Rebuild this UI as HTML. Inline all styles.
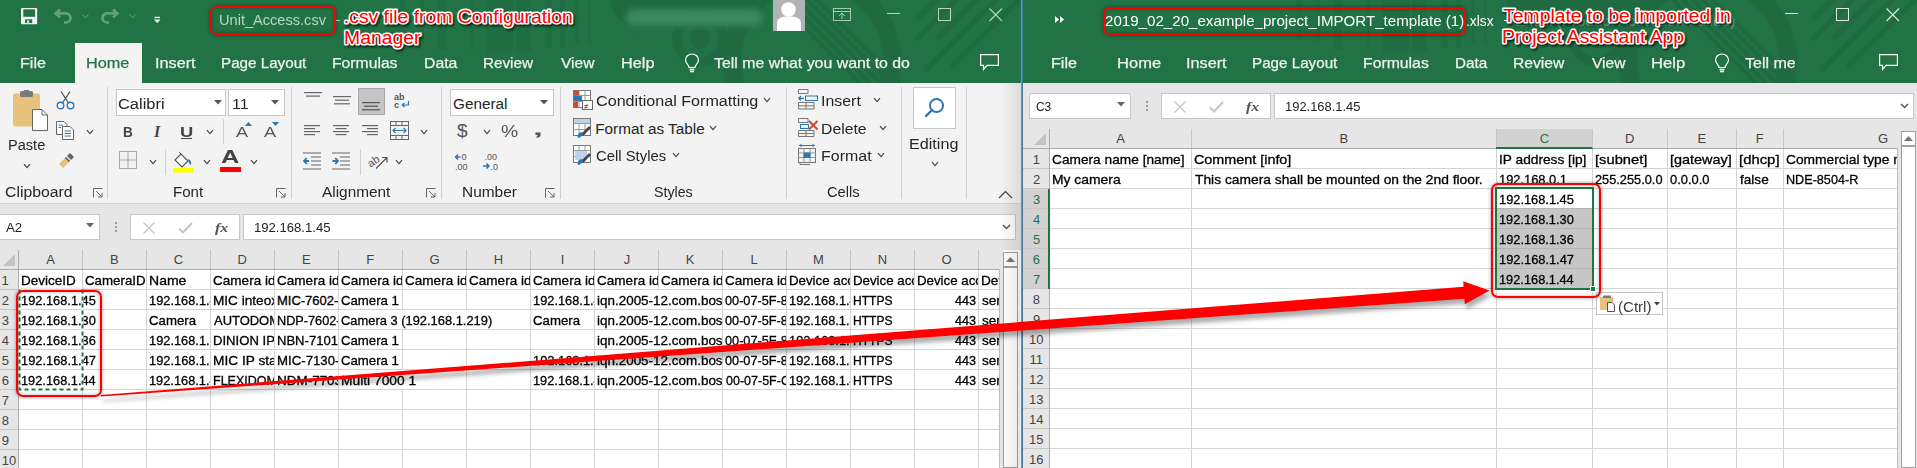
<!DOCTYPE html><html><head><meta charset="utf-8"><style>html,body{margin:0;padding:0;}body{width:1917px;height:468px;overflow:hidden;position:relative;background:#fff;font-family:"Liberation Sans",sans-serif;}svg{overflow:visible}</style></head><body>
<div style="position:absolute;left:0px;top:0px;width:1022px;height:83px;background:#217346;"></div>
<svg style="position:absolute;left:0px;top:0px;" width="1021" height="83" viewBox="0 0 1021 83"><rect x="400" y="0" width="5" height="40" fill="#1f6a41" opacity="0.65"/><rect x="420" y="0" width="4" height="42" fill="#1f6a41" opacity="0.65"/><rect x="437" y="0" width="9" height="50" fill="#1f6a41" opacity="0.65"/><rect x="471" y="0" width="3" height="50" fill="#1f6a41" opacity="0.65"/><rect x="486" y="0" width="27" height="53" fill="#1f6a41" opacity="0.65"/><rect x="516" y="0" width="15" height="53" fill="#1f6a41" opacity="0.65"/><rect x="545" y="0" width="7" height="48" fill="#1f6a41" opacity="0.65"/><rect x="560" y="0" width="5" height="48" fill="#1f6a41" opacity="0.65"/><rect x="575" y="0" width="4" height="45" fill="#1f6a41" opacity="0.65"/><rect x="588" y="0" width="3" height="45" fill="#1f6a41" opacity="0.65"/><rect x="611" y="-30" width="150" height="58" rx="28" fill="#1f6a41"/><circle cx="700" cy="38.5" r="10.1" fill="#1f6a41"/><circle cx="700" cy="38.5" r="23.2" fill="none" stroke="#1f6a41" stroke-width="9"/><circle cx="812" cy="60" r="80" fill="none" stroke="#1f6a41" stroke-width="18"/><path d="M772 -5 L867 90" stroke="#1f6a41" stroke-width="4"/><path d="M782 -5 L877 90" stroke="#1f6a41" stroke-width="4"/><path d="M792 -5 L887 90" stroke="#1f6a41" stroke-width="4"/><path d="M802 -5 L897 90" stroke="#1f6a41" stroke-width="4"/><path d="M812 -5 L907 90" stroke="#1f6a41" stroke-width="4"/><path d="M918.6 17.7 L959 -22" stroke="#1f6a41" stroke-width="5.5" stroke-linecap="round"/><path d="M918 38 L998 -42" stroke="#1f6a41" stroke-width="5.5" stroke-linecap="round"/><path d="M938 38 L1030 -54" stroke="#1f6a41" stroke-width="5.5" stroke-linecap="round"/><path d="M926.5 69 L1030 -34" stroke="#1f6a41" stroke-width="5.5" stroke-linecap="round"/><path d="M953 65.6 L1030 -11" stroke="#1f6a41" stroke-width="5.5" stroke-linecap="round"/></svg>
<div style="position:absolute;left:626px;top:9px;width:136px;height:17px;border-radius:8px;background:#3b8860;filter:blur(3px)"></div>
<svg style="position:absolute;left:21px;top:8px;" width="17" height="17" viewBox="0 0 17 17"><rect x="0" y="0" width="16.2" height="16.3" rx="1.2" fill="#f2f2f2"/><rect x="2.3" y="1.3" width="11.8" height="7.5" fill="#217346"/><rect x="4.1" y="11.3" width="7.1" height="3.8" fill="#217346"/><rect x="6.2" y="12.3" width="1.7" height="2.8" fill="#f2f2f2"/></svg>
<svg style="position:absolute;left:54px;top:9px;" width="19" height="16" viewBox="0 0 19 16"><path d="M2 4.4 H12 A4.55 4.55 0 0 1 12 13.5 H10" fill="none" stroke="#62a07f" stroke-width="2.6"/><path d="M6 0.6 L1.6 4.4 L6 8.2" fill="none" stroke="#62a07f" stroke-width="2.6"/></svg>
<svg style="position:absolute;left:82px;top:14px;" width="8" height="5" viewBox="0 0 8 5"><path d="M0.5 0.5 L3.5 3.8 L6.5 0.5" fill="none" stroke="#62a07f" stroke-width="1"/></svg>
<svg style="position:absolute;left:101px;top:9px;" width="19" height="16" viewBox="0 0 19 16"><path d="M16 4.4 H6 A4.55 4.55 0 0 0 6 13.5 H8" fill="none" stroke="#62a07f" stroke-width="2.6"/><path d="M12 0.6 L16.4 4.4 L12 8.2" fill="none" stroke="#62a07f" stroke-width="2.6"/></svg>
<svg style="position:absolute;left:129px;top:14px;" width="8" height="5" viewBox="0 0 8 5"><path d="M0.5 0.5 L3.5 3.8 L6.5 0.5" fill="none" stroke="#62a07f" stroke-width="1"/></svg>
<svg style="position:absolute;left:154px;top:16px;" width="7" height="8" viewBox="0 0 7 8"><rect x="0.5" y="0.8" width="5.5" height="1.3" fill="#fff"/><polygon points="0,3.6 6.5,3.6 3.25,7" fill="#fff"/></svg>
<div style="position:absolute;left:218.61px;top:12.08px;font-size:15.5px;line-height:15.5px;color:#b9d5c4;white-space:pre;transform-origin:0 0;transform:scaleX(0.9408);">Unit_Access.csv</div>
<div style="position:absolute;left:336px;top:20px;width:4px;height:1px;background:#b9d5c4;"></div>
<svg style="position:absolute;left:773px;top:0px;" width="32" height="31" viewBox="0 0 32 31"><rect width="32" height="31" fill="#b3b3b3"/><circle cx="15.5" cy="9.5" r="7.3" fill="#fff"/><path d="M4 31 V23 C4 18 8 16.5 15.5 16.5 C23 16.5 28 18 28 23 V31 Z" fill="#fff"/></svg>
<svg style="position:absolute;left:833px;top:8px;" width="18" height="14" viewBox="0 0 18 14"><rect x="0.5" y="0.5" width="17" height="12" fill="none" stroke="#d2e6da" stroke-width="1" opacity="0.75"/><line x1="0.5" y1="3.5" x2="17.5" y2="3.5" stroke="#d2e6da" opacity="0.75"/><path d="M9 11 V5.5 M6 8 L9 5 L12 8" fill="none" stroke="#d2e6da" opacity="0.75"/></svg>
<div style="position:absolute;left:887px;top:13px;width:13px;height:1px;background:#d2e6da;opacity:0.85"></div>
<svg style="position:absolute;left:938px;top:8px;" width="14" height="14" viewBox="0 0 14 14"><rect x="0.5" y="0.5" width="12" height="12" fill="none" stroke="#d2e6da" opacity="0.85"/></svg>
<svg style="position:absolute;left:989px;top:8px;" width="14" height="14" viewBox="0 0 14 14"><path d="M0.5 0.5 L13 13 M13 0.5 L0.5 13" stroke="#d2e6da" stroke-width="1.1" opacity="0.85"/></svg>
<div style="position:absolute;left:75px;top:43px;width:67px;height:40px;background:#f3f3f3;"></div>
<div style="position:absolute;left:19.71px;top:55.10px;font-size:15px;line-height:15px;color:#f1f1f1;white-space:pre;transform-origin:0 0;transform:scaleX(1.0774);-webkit-text-stroke:0.25px #f1f1f1;">File</div>
<div style="position:absolute;left:154.54px;top:55.10px;font-size:15px;line-height:15px;color:#f1f1f1;white-space:pre;transform-origin:0 0;transform:scaleX(1.0811);-webkit-text-stroke:0.25px #f1f1f1;">Insert</div>
<div style="position:absolute;left:220.78px;top:55.10px;font-size:15px;line-height:15px;color:#f1f1f1;white-space:pre;transform-origin:0 0;transform:scaleX(1.0127);-webkit-text-stroke:0.25px #f1f1f1;">Page Layout</div>
<div style="position:absolute;left:332.04px;top:55.10px;font-size:15px;line-height:15px;color:#f1f1f1;white-space:pre;transform-origin:0 0;transform:scaleX(1.0473);-webkit-text-stroke:0.25px #f1f1f1;">Formulas</div>
<div style="position:absolute;left:423.74px;top:55.10px;font-size:15px;line-height:15px;color:#f1f1f1;white-space:pre;transform-origin:0 0;transform:scaleX(1.0509);-webkit-text-stroke:0.25px #f1f1f1;">Data</div>
<div style="position:absolute;left:483.18px;top:55.10px;font-size:15px;line-height:15px;color:#f1f1f1;white-space:pre;transform-origin:0 0;transform:scaleX(1.0167);-webkit-text-stroke:0.25px #f1f1f1;">Review</div>
<div style="position:absolute;left:560.72px;top:55.10px;font-size:15px;line-height:15px;color:#f1f1f1;white-space:pre;transform-origin:0 0;transform:scaleX(1.0381);-webkit-text-stroke:0.25px #f1f1f1;">View</div>
<div style="position:absolute;left:621.20px;top:55.10px;font-size:15px;line-height:15px;color:#f1f1f1;white-space:pre;transform-origin:0 0;transform:scaleX(1.0853);-webkit-text-stroke:0.25px #f1f1f1;">Help</div>
<div style="position:absolute;left:86.20px;top:55.10px;font-size:15px;line-height:15px;color:#217346;white-space:pre;transform-origin:0 0;transform:scaleX(1.0840);-webkit-text-stroke:0.25px #217346;">Home</div>
<svg style="position:absolute;left:684px;top:54px;" width="16" height="19" viewBox="0 0 16 19"><path d="M5 13.5 C5 10.5 1.5 9.5 1.5 6 A6.5 6 0 0 1 14.5 6 C14.5 9.5 11 10.5 11 13.5 Z" fill="none" stroke="#ffffff" stroke-width="1.2"/><path d="M5.5 15.5 H10.5 M6 17.5 H10" stroke="#ffffff" stroke-width="1.3"/></svg>
<div style="position:absolute;left:713.68px;top:55.10px;font-size:15px;line-height:15px;color:#f1f1f1;white-space:pre;transform-origin:0 0;transform:scaleX(1.0586);-webkit-text-stroke:0.25px #f1f1f1;">Tell me what you want to do</div>
<svg style="position:absolute;left:980px;top:54px;" width="19" height="17" viewBox="0 0 19 17"><path d="M0.6 0.6 H18.4 V11.4 H7 L3.5 15.5 V11.4 H0.6 Z" fill="none" stroke="#ffffff" stroke-width="1.2"/></svg>
<div style="position:absolute;left:0px;top:83px;width:1022px;height:120px;background:#f3f3f3;"></div>
<div style="position:absolute;left:0px;top:203px;width:1022px;height:1px;background:#d5d5d5;"></div>
<svg style="position:absolute;left:12px;top:90px;" width="37" height="42" viewBox="0 0 37 42"><rect x="1" y="3.5" width="27" height="33" rx="2" fill="#e8c27c"/><rect x="8" y="1" width="13" height="6" rx="1.5" fill="#7a7a7a"/><rect x="12" y="0" width="5" height="3" fill="#7a7a7a"/><path d="M20.5 19.5 H30 L35.5 25 V40.5 H20.5 Z" fill="#fff" stroke="#666" stroke-width="1"/><path d="M30 19.5 V25 H35.5" fill="none" stroke="#666"/></svg>
<div style="position:absolute;left:8.43px;top:137.05px;font-size:15.3px;line-height:15.3px;color:#262626;white-space:pre;transform-origin:0 0;transform:scaleX(0.9522);">Paste</div>
<svg style="position:absolute;left:23.0px;top:162.5px;" width="8" height="6" viewBox="0 0 8 6"><path d="M1 1.2 L4.0 4.6 L7 1.2" fill="none" stroke="#444" stroke-width="1.2"/></svg>
<svg style="position:absolute;left:56px;top:91px;" width="19" height="19" viewBox="0 0 19 19"><path d="M5 0.5 L12.5 12 M14 0.5 L6.5 12" stroke="#555" stroke-width="1.3" fill="none"/><circle cx="4.5" cy="14.5" r="3.3" fill="none" stroke="#2e75b6" stroke-width="1.4"/><circle cx="14.5" cy="14.5" r="3.3" fill="none" stroke="#2e75b6" stroke-width="1.4"/></svg>
<svg style="position:absolute;left:56px;top:121px;" width="19" height="19" viewBox="0 0 19 19"><path d="M0.5 0.5 H8 L11 3.5 V13.5 H0.5 Z" fill="#fff" stroke="#666"/><path d="M6.5 5.5 H14 L17.5 9 V18.5 H6.5 Z" fill="#fff" stroke="#666"/><path d="M2.5 4 H7 M2.5 6.5 H5 M8.5 10 H15 M8.5 12.5 H15 M8.5 15 H15" stroke="#2e75b6" stroke-width="1"/></svg>
<svg style="position:absolute;left:86.0px;top:129px;" width="8" height="6" viewBox="0 0 8 6"><path d="M1 1.2 L4.0 4.6 L7 1.2" fill="none" stroke="#444" stroke-width="1.2"/></svg>
<svg style="position:absolute;left:58px;top:152px;" width="18" height="17" viewBox="0 0 18 17"><path d="M1 12 L8 5 L12 9 L5 16 Z" fill="#e8c27c"/><path d="M9 4 L12 1 L16 5 L13 8 Z" fill="#666"/><path d="M7.5 5.5 L11.5 9.5" stroke="#555" stroke-width="1.5"/></svg>
<div style="position:absolute;left:5.21px;top:184.45px;font-size:15.3px;line-height:15.3px;color:#262626;white-space:pre;transform-origin:0 0;transform:scaleX(1.0310);">Clipboard</div>
<svg style="position:absolute;left:92.5px;top:187.5px;" width="11" height="10" viewBox="0 0 11 10"><path d="M0.5 9.5 V0.5 H9.5" fill="none" stroke="#666" stroke-width="1"/><path d="M3 3 L9 9 M9 5 V9 H5" fill="none" stroke="#666" stroke-width="1"/></svg>
<div style="position:absolute;left:107px;top:87px;width:1px;height:112px;background:#d1d1d1;"></div>
<div style="position:absolute;left:116px;top:89px;width:110px;height:27px;background:#fff;box-sizing:border-box;border:1px solid #c6c6c6"></div>
<div style="position:absolute;left:118.38px;top:95.65px;font-size:15.3px;line-height:15.3px;color:#262626;white-space:pre;transform-origin:0 0;transform:scaleX(1.0737);">Calibri</div>
<svg style="position:absolute;left:214px;top:99.5px;" width="8" height="5" viewBox="0 0 8 5"><polygon points="0,0 8,0 4,4.5" fill="#555"/></svg>
<div style="position:absolute;left:228px;top:89px;width:57px;height:27px;background:#fff;box-sizing:border-box;border:1px solid #c6c6c6"></div>
<div style="position:absolute;left:231.80px;top:95.65px;font-size:15.3px;line-height:15.3px;color:#262626;white-space:pre;transform-origin:0 0;transform:scaleX(1.0500);">11</div>
<svg style="position:absolute;left:271px;top:99.5px;" width="8" height="5" viewBox="0 0 8 5"><polygon points="0,0 8,0 4,4.5" fill="#555"/></svg>
<div style="position:absolute;left:123.12px;top:124.00px;font-size:15px;line-height:15px;color:#444;font-weight:bold;white-space:pre;transform-origin:0 0;transform:scaleX(0.9071);">B</div>
<div style="position:absolute;left:154px;top:123.5px;font:italic bold 16px/16px 'Liberation Serif',serif;color:#444">I</div>
<div style="position:absolute;left:179.90px;top:124.00px;font-size:15px;line-height:15px;color:#444;font-weight:bold;white-space:pre;transform-origin:0 0;transform:scaleX(1.2222);">U</div>
<div style="position:absolute;left:181px;top:138px;width:11px;height:1.3px;background:#444;"></div>
<svg style="position:absolute;left:206.0px;top:129px;" width="8" height="6" viewBox="0 0 8 6"><path d="M1 1.2 L4.0 4.6 L7 1.2" fill="none" stroke="#444" stroke-width="1.2"/></svg>
<div style="position:absolute;left:223px;top:119px;width:1px;height:25px;background:#d1d1d1;"></div>
<div style="position:absolute;left:236.00px;top:124.30px;font-size:15px;line-height:15px;color:#555;white-space:pre;transform-origin:0 0;transform:scaleX(1.2030);">A</div>
<svg style="position:absolute;left:245px;top:122px;" width="7" height="4" viewBox="0 0 7 4"><polygon points="0,4 3.5,0 7,4" fill="#2e75b6"/></svg>
<div style="position:absolute;left:264.00px;top:125.15px;font-size:14px;line-height:14px;color:#555;white-space:pre;transform-origin:0 0;transform:scaleX(1.2889);">A</div>
<svg style="position:absolute;left:272px;top:122px;" width="7" height="4" viewBox="0 0 7 4"><polygon points="0,0 3.5,4 7,0" fill="#2e75b6"/></svg>
<svg style="position:absolute;left:119px;top:151px;" width="19" height="19" viewBox="0 0 19 19"><rect x="0.5" y="0.5" width="17" height="17" fill="none" stroke="#666" stroke-dasharray="1 1"/><path d="M9 0.5 V17.5 M0.5 9 H17.5" stroke="#666" stroke-dasharray="1 1"/></svg>
<svg style="position:absolute;left:148.5px;top:159px;" width="8" height="6" viewBox="0 0 8 6"><path d="M1 1.2 L4.0 4.6 L7 1.2" fill="none" stroke="#444" stroke-width="1.2"/></svg>
<div style="position:absolute;left:165px;top:149px;width:1px;height:26px;background:#d1d1d1;"></div>
<svg style="position:absolute;left:172px;top:151px;" width="23" height="22" viewBox="0 0 23 22"><path d="M3 9 L9 3 L16 10 L10 16 Z" fill="#fff" stroke="#555" stroke-width="1.2"/><path d="M9 3 L7 0.8" stroke="#555"/><path d="M16 8 C19 9 20 12 18.5 14 C17 12 16 10 16 8 Z" fill="#2e75b6"/><rect x="1" y="17" width="20" height="4.5" fill="#ffff00"/></svg>
<svg style="position:absolute;left:202.5px;top:159px;" width="8" height="6" viewBox="0 0 8 6"><path d="M1 1.2 L4.0 4.6 L7 1.2" fill="none" stroke="#444" stroke-width="1.2"/></svg>
<div style="position:absolute;left:221.37px;top:147.42px;font-size:19px;line-height:19px;color:#444;font-weight:bold;white-space:pre;transform-origin:0 0;transform:scaleX(1.3354);">A</div>
<div style="position:absolute;left:220px;top:167px;width:21px;height:4.5px;background:#ff0000;"></div>
<svg style="position:absolute;left:249.5px;top:159px;" width="8" height="6" viewBox="0 0 8 6"><path d="M1 1.2 L4.0 4.6 L7 1.2" fill="none" stroke="#444" stroke-width="1.2"/></svg>
<div style="position:absolute;left:172.79px;top:183.85px;font-size:15.3px;line-height:15.3px;color:#262626;white-space:pre;transform-origin:0 0;transform:scaleX(0.9864);">Font</div>
<svg style="position:absolute;left:276px;top:187.5px;" width="11" height="10" viewBox="0 0 11 10"><path d="M0.5 9.5 V0.5 H9.5" fill="none" stroke="#666" stroke-width="1"/><path d="M3 3 L9 9 M9 5 V9 H5" fill="none" stroke="#666" stroke-width="1"/></svg>
<div style="position:absolute;left:291px;top:87px;width:1px;height:112px;background:#d1d1d1;"></div>
<svg style="position:absolute;left:304px;top:92px;" width="20" height="9.0" viewBox="0 0 20 9.0"><rect x="0" y="0.0" width="18" height="1.2" fill="#666"/><rect x="2" y="3.5" width="14" height="1.2" fill="#666"/></svg>
<svg style="position:absolute;left:333px;top:96px;" width="20" height="12.8" viewBox="0 0 20 12.8"><rect x="0" y="0.0" width="18" height="1.2" fill="#666"/><rect x="2" y="3.6" width="14" height="1.2" fill="#666"/><rect x="1" y="7.2" width="16" height="1.2" fill="#666"/></svg>
<div style="position:absolute;left:358px;top:88px;width:27px;height:27px;background:#c5c5c5;box-sizing:border-box;border:1px solid #a8a8a8"></div>
<svg style="position:absolute;left:362px;top:102px;" width="20" height="12.8" viewBox="0 0 20 12.8"><rect x="0" y="0.0" width="18" height="1.2" fill="#555"/><rect x="2" y="3.6" width="14" height="1.2" fill="#555"/><rect x="0" y="7.2" width="18" height="1.2" fill="#555"/></svg>
<svg style="position:absolute;left:393px;top:92px;" width="18" height="18" viewBox="0 0 18 18"><text x="1" y="7.5" font-family="Liberation Sans" font-size="9" font-weight="bold" fill="#555">ab</text><text x="1" y="16" font-family="Liberation Sans" font-size="9" font-weight="bold" fill="#555">c</text><path d="M15.5 9 V13 H9.5 M11.5 11 L9.2 13 L11.5 15" fill="none" stroke="#2e75b6" stroke-width="1.2"/></svg>
<svg style="position:absolute;left:304px;top:125px;" width="20" height="14" viewBox="0 0 20 14"><rect x="0" y="0" width="16" height="1.2" fill="#666"/><rect x="0" y="3" width="11" height="1.2" fill="#666"/><rect x="0" y="6" width="16" height="1.2" fill="#666"/><rect x="0" y="9" width="11" height="1.2" fill="#666"/></svg>
<svg style="position:absolute;left:333px;top:125px;" width="20" height="14" viewBox="0 0 20 14"><rect x="0" y="0" width="16" height="1.2" fill="#666"/><rect x="2.5" y="3" width="11" height="1.2" fill="#666"/><rect x="0" y="6" width="16" height="1.2" fill="#666"/><rect x="2.5" y="9" width="11" height="1.2" fill="#666"/></svg>
<svg style="position:absolute;left:362px;top:125px;" width="20" height="14" viewBox="0 0 20 14"><rect x="0" y="0" width="16" height="1.2" fill="#666"/><rect x="5" y="3" width="11" height="1.2" fill="#666"/><rect x="0" y="6" width="16" height="1.2" fill="#666"/><rect x="5" y="9" width="11" height="1.2" fill="#666"/></svg>
<svg style="position:absolute;left:390px;top:121px;" width="21" height="20" viewBox="0 0 21 20"><rect x="0.5" y="0.5" width="18" height="18" fill="none" stroke="#666"/><path d="M0.5 4.5 H18.5 M0.5 14.5 H18.5 M6 0.5 V4.5 M12 0.5 V4.5 M6 14.5 V18.5 M12 14.5 V18.5" stroke="#666"/><path d="M3 9.5 H16 M5.5 7 L3 9.5 L5.5 12 M13.5 7 L16 9.5 L13.5 12" fill="none" stroke="#2e75b6" stroke-width="1.2"/></svg>
<svg style="position:absolute;left:420.0px;top:129px;" width="8" height="6" viewBox="0 0 8 6"><path d="M1 1.2 L4.0 4.6 L7 1.2" fill="none" stroke="#444" stroke-width="1.2"/></svg>
<svg style="position:absolute;left:303px;top:152px;" width="20" height="18" viewBox="0 0 20 18"><path d="M0 1 H18 M8 5 H18 M8 9 H18 M8 13 H18 M0 17 H18" stroke="#666" stroke-width="1.1"/><path d="M6 9 H1 M3.8 6 L1 9 L3.8 12" fill="none" stroke="#2e75b6" stroke-width="1.8"/></svg>
<svg style="position:absolute;left:332px;top:152px;" width="20" height="18" viewBox="0 0 20 18"><path d="M0 1 H18 M8 5 H18 M8 9 H18 M8 13 H18 M0 17 H18" stroke="#666" stroke-width="1.1"/><path d="M0.5 9 H6 M3.2 6 L6 9 L3.2 12" fill="none" stroke="#2e75b6" stroke-width="1.8"/></svg>
<div style="position:absolute;left:360px;top:149px;width:1px;height:26px;background:#d1d1d1;"></div>
<svg style="position:absolute;left:367px;top:151px;" width="22" height="19" viewBox="0 0 22 19"><text x="0" y="14" font-family="Liberation Sans" font-size="11" fill="#555" transform="rotate(-35 6 10)">ab</text><path d="M9 17.5 L20 6.5 M15 6.5 H20 V11.5" fill="none" stroke="#555" stroke-width="1.2"/></svg>
<svg style="position:absolute;left:394.5px;top:159px;" width="8" height="6" viewBox="0 0 8 6"><path d="M1 1.2 L4.0 4.6 L7 1.2" fill="none" stroke="#444" stroke-width="1.2"/></svg>
<div style="position:absolute;left:321.50px;top:184.45px;font-size:15.3px;line-height:15.3px;color:#262626;white-space:pre;transform-origin:0 0;transform:scaleX(1.0054);">Alignment</div>
<svg style="position:absolute;left:426px;top:187.5px;" width="11" height="10" viewBox="0 0 11 10"><path d="M0.5 9.5 V0.5 H9.5" fill="none" stroke="#666" stroke-width="1"/><path d="M3 3 L9 9 M9 5 V9 H5" fill="none" stroke="#666" stroke-width="1"/></svg>
<div style="position:absolute;left:441px;top:87px;width:1px;height:112px;background:#d1d1d1;"></div>
<div style="position:absolute;left:450px;top:89px;width:104px;height:27px;background:#fff;box-sizing:border-box;border:1px solid #c6c6c6"></div>
<div style="position:absolute;left:453.03px;top:95.65px;font-size:15.3px;line-height:15.3px;color:#262626;white-space:pre;transform-origin:0 0;">General</div>
<svg style="position:absolute;left:540px;top:99.5px;" width="8" height="5" viewBox="0 0 8 5"><polygon points="0,0 8,0 4,4.5" fill="#555"/></svg>
<div style="position:absolute;left:457.11px;top:121.42px;font-size:19px;line-height:19px;color:#555;white-space:pre;transform-origin:0 0;">$</div>
<svg style="position:absolute;left:482.6px;top:129px;" width="8" height="6" viewBox="0 0 8 6"><path d="M1 1.2 L4.0 4.6 L7 1.2" fill="none" stroke="#444" stroke-width="1.2"/></svg>
<div style="position:absolute;left:500.92px;top:123.11px;font-size:17px;line-height:17px;color:#555;white-space:pre;transform-origin:0 0;transform:scaleX(1.1406);">%</div>
<div style="position:absolute;left:533.00px;top:120.61px;font-size:17px;line-height:17px;color:#555;font-weight:bold;white-space:pre;transform-origin:0 0;transform:scaleX(2.1008);">,</div>
<svg style="position:absolute;left:454px;top:151px;" width="18" height="20" viewBox="0 0 18 20"><path d="M6.5 6 H1.5 M4 3.5 L1.5 6 L4 8.5" fill="none" stroke="#2e75b6" stroke-width="1.5"/><text x="7.5" y="9" font-family="Liberation Sans" font-size="9" fill="#555">0</text><text x="1" y="18.5" font-family="Liberation Sans" font-size="9" fill="#555">.00</text></svg>
<svg style="position:absolute;left:482px;top:151px;" width="20" height="20" viewBox="0 0 20 20"><text x="2.5" y="9" font-family="Liberation Sans" font-size="9" fill="#555">.00</text><path d="M1 15 H7 M4.5 12.5 L7 15 L4.5 17.5" fill="none" stroke="#2e75b6" stroke-width="1.5"/><text x="8.5" y="18.5" font-family="Liberation Sans" font-size="9" fill="#555">.0</text></svg>
<div style="position:absolute;left:462.07px;top:183.85px;font-size:15.3px;line-height:15.3px;color:#262626;white-space:pre;transform-origin:0 0;transform:scaleX(1.0087);">Number</div>
<svg style="position:absolute;left:545px;top:187.5px;" width="11" height="10" viewBox="0 0 11 10"><path d="M0.5 9.5 V0.5 H9.5" fill="none" stroke="#666" stroke-width="1"/><path d="M3 3 L9 9 M9 5 V9 H5" fill="none" stroke="#666" stroke-width="1"/></svg>
<div style="position:absolute;left:560px;top:87px;width:1px;height:112px;background:#d1d1d1;"></div>
<svg style="position:absolute;left:573px;top:90px;" width="21" height="21" viewBox="0 0 21 21"><rect x="0.5" y="0.5" width="17" height="17" fill="#fff" stroke="#777"/><path d="M0.5 5.5 H17.5 M0.5 11.5 H17.5 M6 0.5 V17.5 M12 0.5 V17.5" stroke="#999"/><rect x="1" y="1" width="5" height="4.5" fill="#d24726"/><rect x="1" y="6" width="8" height="5" fill="#2e75b6"/><rect x="1" y="12" width="4" height="5" fill="#d24726"/><rect x="9.5" y="10.5" width="10" height="9" fill="#fff" stroke="#666"/><text x="11" y="18.5" font-family="Liberation Sans" font-size="8" fill="#444">≠</text></svg>
<div style="position:absolute;left:595.69px;top:93.05px;font-size:15.3px;line-height:15.3px;color:#262626;white-space:pre;transform-origin:0 0;transform:scaleX(1.0548);">Conditional Formatting</div>
<svg style="position:absolute;left:762.5px;top:96.5px;" width="8" height="6" viewBox="0 0 8 6"><path d="M1 1.2 L4.0 4.6 L7 1.2" fill="none" stroke="#444" stroke-width="1.2"/></svg>
<svg style="position:absolute;left:573px;top:118px;" width="21" height="21" viewBox="0 0 21 21"><rect x="0.5" y="0.5" width="17" height="17" fill="#fff" stroke="#777"/><path d="M0.5 5.5 H17.5 M0.5 11.5 H17.5 M6 0.5 V17.5 M12 0.5 V17.5" stroke="#999"/><rect x="1" y="1" width="16" height="4" fill="#bcd3ee"/><path d="M9 17 L17 9" stroke="#444" stroke-width="2.6"/><path d="M5 20 C4 17 6 14 9 14 L10 16 C9 18 7 20 5 20 Z" fill="#2e75b6"/></svg>
<div style="position:absolute;left:595.28px;top:121.05px;font-size:15.3px;line-height:15.3px;color:#262626;white-space:pre;transform-origin:0 0;">Format as Table</div>
<svg style="position:absolute;left:709.0px;top:124.5px;" width="8" height="6" viewBox="0 0 8 6"><path d="M1 1.2 L4.0 4.6 L7 1.2" fill="none" stroke="#444" stroke-width="1.2"/></svg>
<svg style="position:absolute;left:573px;top:145px;" width="21" height="21" viewBox="0 0 21 21"><rect x="0.5" y="0.5" width="17" height="17" fill="#fff" stroke="#777"/><path d="M0.5 5.5 H17.5 M0.5 11.5 H17.5 M6 0.5 V17.5 M12 0.5 V17.5" stroke="#999"/><rect x="2" y="6" width="12" height="9" fill="#bcd3ee"/><path d="M9 17 L17 9" stroke="#444" stroke-width="2.6"/><path d="M5 20 C4 17 6 14 9 14 L10 16 C9 18 7 20 5 20 Z" fill="#2e75b6"/></svg>
<div style="position:absolute;left:595.76px;top:148.35px;font-size:15.3px;line-height:15.3px;color:#262626;white-space:pre;transform-origin:0 0;transform:scaleX(0.9705);">Cell Styles</div>
<svg style="position:absolute;left:671.5px;top:152px;" width="8" height="6" viewBox="0 0 8 6"><path d="M1 1.2 L4.0 4.6 L7 1.2" fill="none" stroke="#444" stroke-width="1.2"/></svg>
<div style="position:absolute;left:653.76px;top:184.45px;font-size:15.3px;line-height:15.3px;color:#262626;white-space:pre;transform-origin:0 0;transform:scaleX(0.9291);">Styles</div>
<div style="position:absolute;left:786px;top:87px;width:1px;height:112px;background:#d1d1d1;"></div>
<svg style="position:absolute;left:798px;top:89px;" width="20" height="21" viewBox="0 0 20 21"><path d="M0.5 0.5 H10 V4.5 H0.5 Z M0.5 13.5 H16 V20 H0.5 Z M8 13.5 V20 M0.5 16.8 H16" fill="none" stroke="#777"/><rect x="7.5" y="7" width="12" height="4.5" fill="none" stroke="#2e75b6"/><path d="M6 9.3 H1 M3 7 L0.8 9.3 L3 11.6" fill="none" stroke="#2e75b6" stroke-width="1.3"/></svg>
<div style="position:absolute;left:820.97px;top:93.05px;font-size:15.3px;line-height:15.3px;color:#262626;white-space:pre;transform-origin:0 0;transform:scaleX(1.0409);">Insert</div>
<svg style="position:absolute;left:873.0px;top:96.5px;" width="8" height="6" viewBox="0 0 8 6"><path d="M1 1.2 L4.0 4.6 L7 1.2" fill="none" stroke="#444" stroke-width="1.2"/></svg>
<svg style="position:absolute;left:798px;top:118px;" width="21" height="19" viewBox="0 0 21 19"><path d="M0.5 0.5 H10 V4.5 H0.5 Z M0.5 12.5 H16 V18.5 H0.5 Z M8 12.5 V18.5 M0.5 15.5 H16" fill="none" stroke="#777"/><rect x="2.5" y="6.5" width="8" height="4" fill="none" stroke="#2e75b6"/><path d="M11 3 L19.5 11.5 M19.5 3 L11 11.5" stroke="#d24726" stroke-width="2"/></svg>
<div style="position:absolute;left:821.14px;top:121.05px;font-size:15.3px;line-height:15.3px;color:#262626;white-space:pre;transform-origin:0 0;transform:scaleX(1.0306);">Delete</div>
<svg style="position:absolute;left:878.5px;top:124.5px;" width="8" height="6" viewBox="0 0 8 6"><path d="M1 1.2 L4.0 4.6 L7 1.2" fill="none" stroke="#444" stroke-width="1.2"/></svg>
<svg style="position:absolute;left:798px;top:144px;" width="21" height="21" viewBox="0 0 21 21"><path d="M1 1.5 H17 M3 0 V3 M15 0 V3" stroke="#2e75b6" stroke-width="1"/><rect x="0.5" y="4.5" width="17" height="14" fill="none" stroke="#777"/><path d="M0.5 9 H17.5 M0.5 13.5 H17.5 M6 4.5 V18.5 M12 4.5 V18.5" stroke="#999"/><rect x="5.5" y="8.5" width="7" height="5.5" fill="#2e75b6"/><path d="M2 18.5 V20.5 H12" stroke="#777" fill="none"/></svg>
<div style="position:absolute;left:821.12px;top:148.35px;font-size:15.3px;line-height:15.3px;color:#262626;white-space:pre;transform-origin:0 0;transform:scaleX(1.0441);">Format</div>
<svg style="position:absolute;left:877.0px;top:152px;" width="8" height="6" viewBox="0 0 8 6"><path d="M1 1.2 L4.0 4.6 L7 1.2" fill="none" stroke="#444" stroke-width="1.2"/></svg>
<div style="position:absolute;left:827.17px;top:184.45px;font-size:15.3px;line-height:15.3px;color:#262626;white-space:pre;transform-origin:0 0;transform:scaleX(0.9590);">Cells</div>
<div style="position:absolute;left:901px;top:87px;width:1px;height:112px;background:#d1d1d1;"></div>
<div style="position:absolute;left:913px;top:87px;width:43px;height:42px;background:#ffffff;box-sizing:border-box;border:1px solid #c6c6c6"></div>
<svg style="position:absolute;left:924px;top:97px;" width="22" height="22" viewBox="0 0 22 22"><circle cx="12.5" cy="8.5" r="6.5" fill="none" stroke="#2e75b6" stroke-width="2"/><path d="M8 13 L2 19" stroke="#2e75b6" stroke-width="2.4" stroke-linecap="round"/></svg>
<div style="position:absolute;left:909.41px;top:136.05px;font-size:15.3px;line-height:15.3px;color:#262626;white-space:pre;transform-origin:0 0;transform:scaleX(1.0556);">Editing</div>
<svg style="position:absolute;left:930.5px;top:161px;" width="8" height="6" viewBox="0 0 8 6"><path d="M1 1.2 L4.0 4.6 L7 1.2" fill="none" stroke="#444" stroke-width="1.2"/></svg>
<div style="position:absolute;left:966px;top:87px;width:1px;height:112px;background:#d1d1d1;"></div>
<svg style="position:absolute;left:998px;top:190px;" width="15" height="9" viewBox="0 0 15 9"><path d="M1 8 L7.5 1.5 L14 8" fill="none" stroke="#444" stroke-width="1.2"/></svg>
<div style="position:absolute;left:0px;top:204px;width:1022px;height:46px;background:#e6e6e6;"></div>
<div style="position:absolute;left:-1px;top:214px;width:101px;height:26px;background:#ffffff;box-sizing:border-box;border:1px solid #c6c6c6"></div>
<div style="position:absolute;left:5.50px;top:220.70px;font-size:13px;line-height:13px;color:#222;white-space:pre;transform-origin:0 0;transform:scaleX(1.0191);">A2</div>
<svg style="position:absolute;left:86px;top:223.3px;" width="8" height="5" viewBox="0 0 8 5"><polygon points="0,0 8,0 4,4.5" fill="#666"/></svg>
<div style="position:absolute;left:115px;top:222px;width:2px;height:2px;background:#9a9a9a;"></div>
<div style="position:absolute;left:115px;top:226px;width:2px;height:2px;background:#9a9a9a;"></div>
<div style="position:absolute;left:115px;top:230px;width:2px;height:2px;background:#9a9a9a;"></div>
<div style="position:absolute;left:130px;top:214px;width:110px;height:26px;background:#ffffff;box-sizing:border-box;border:1px solid #c6c6c6"></div>
<svg style="position:absolute;left:143px;top:222px;" width="12" height="12" viewBox="0 0 12 12"><path d="M0.5 0.5 L11.5 11.5 M11.5 0.5 L0.5 11.5" stroke="#c4c4c4" stroke-width="1.3"/></svg>
<svg style="position:absolute;left:178px;top:222px;" width="15" height="12" viewBox="0 0 15 12"><path d="M1 6.5 L5 10.5 L14 1" fill="none" stroke="#c4c4c4" stroke-width="2"/></svg>
<div style="position:absolute;left:215.26px;top:221.00px;font-size:13px;line-height:13px;color:#555;white-space:pre;transform-origin:0 0;transform:scaleX(1.2226);font-family:'Liberation Serif',serif;font-style:italic;font-weight:bold;">fx</div>
<div style="position:absolute;left:243px;top:214px;width:773px;height:26px;background:#ffffff;box-sizing:border-box;border:1px solid #c6c6c6"></div>
<div style="position:absolute;left:254.02px;top:220.70px;font-size:13px;line-height:13px;color:#222;white-space:pre;transform-origin:0 0;transform:scaleX(1.0077);">192.168.1.45</div>
<svg style="position:absolute;left:1002px;top:224px;" width="9" height="6" viewBox="0 0 9 6"><path d="M1 1 L4.5 4.5 L8 1" fill="none" stroke="#555" stroke-width="1.5"/></svg>
<div style="position:absolute;left:0px;top:250px;width:1000px;height:19px;background:#e6e6e6;"></div>
<div style="position:absolute;left:0px;top:270px;width:18px;height:198px;background:#e6e6e6;"></div>
<div style="position:absolute;left:19px;top:270px;width:981px;height:198px;background:#ffffff;"></div>
<div style="position:absolute;left:0px;top:269px;width:999px;height:1px;background:#ababab;"></div>
<div style="position:absolute;left:18px;top:250px;width:1px;height:218px;background:#ababab;"></div>
<svg style="position:absolute;left:0;top:250px" width="18" height="19"><polygon points="15,4 15,16 3,16" fill="#c4c4c4"/></svg>
<div style="position:absolute;left:82px;top:250px;width:1px;height:19px;background:#c6c6c6;"></div>
<div style="position:absolute;left:18px;top:250px;width:64px;height:19px;overflow:hidden"><div style="position:absolute;left:28.18px;top:3.20px;font-size:13px;line-height:13px;color:#444444;white-space:pre;transform-origin:0 0;">A</div></div>
<div style="position:absolute;left:146px;top:250px;width:1px;height:19px;background:#c6c6c6;"></div>
<div style="position:absolute;left:82px;top:250px;width:64px;height:19px;overflow:hidden"><div style="position:absolute;left:27.98px;top:3.20px;font-size:13px;line-height:13px;color:#444444;white-space:pre;transform-origin:0 0;">B</div></div>
<div style="position:absolute;left:210px;top:250px;width:1px;height:19px;background:#c6c6c6;"></div>
<div style="position:absolute;left:146px;top:250px;width:64px;height:19px;overflow:hidden"><div style="position:absolute;left:27.72px;top:3.20px;font-size:13px;line-height:13px;color:#444444;white-space:pre;transform-origin:0 0;">C</div></div>
<div style="position:absolute;left:274px;top:250px;width:1px;height:19px;background:#c6c6c6;"></div>
<div style="position:absolute;left:210px;top:250px;width:64px;height:19px;overflow:hidden"><div style="position:absolute;left:27.59px;top:3.20px;font-size:13px;line-height:13px;color:#444444;white-space:pre;transform-origin:0 0;">D</div></div>
<div style="position:absolute;left:338px;top:250px;width:1px;height:19px;background:#c6c6c6;"></div>
<div style="position:absolute;left:274px;top:250px;width:64px;height:19px;overflow:hidden"><div style="position:absolute;left:27.92px;top:3.20px;font-size:13px;line-height:13px;color:#444444;white-space:pre;transform-origin:0 0;">E</div></div>
<div style="position:absolute;left:402px;top:250px;width:1px;height:19px;background:#c6c6c6;"></div>
<div style="position:absolute;left:338px;top:250px;width:64px;height:19px;overflow:hidden"><div style="position:absolute;left:28.27px;top:3.20px;font-size:13px;line-height:13px;color:#444444;white-space:pre;transform-origin:0 0;">F</div></div>
<div style="position:absolute;left:466px;top:250px;width:1px;height:19px;background:#c6c6c6;"></div>
<div style="position:absolute;left:402px;top:250px;width:64px;height:19px;overflow:hidden"><div style="position:absolute;left:27.59px;top:3.20px;font-size:13px;line-height:13px;color:#444444;white-space:pre;transform-origin:0 0;">G</div></div>
<div style="position:absolute;left:530px;top:250px;width:1px;height:19px;background:#c6c6c6;"></div>
<div style="position:absolute;left:466px;top:250px;width:64px;height:19px;overflow:hidden"><div style="position:absolute;left:27.82px;top:3.20px;font-size:13px;line-height:13px;color:#444444;white-space:pre;transform-origin:0 0;">H</div></div>
<div style="position:absolute;left:594px;top:250px;width:1px;height:19px;background:#c6c6c6;"></div>
<div style="position:absolute;left:530px;top:250px;width:64px;height:19px;overflow:hidden"><div style="position:absolute;left:30.71px;top:3.20px;font-size:13px;line-height:13px;color:#444444;white-space:pre;transform-origin:0 0;">I</div></div>
<div style="position:absolute;left:658px;top:250px;width:1px;height:19px;background:#c6c6c6;"></div>
<div style="position:absolute;left:594px;top:250px;width:64px;height:19px;overflow:hidden"><div style="position:absolute;left:29.64px;top:3.20px;font-size:13px;line-height:13px;color:#444444;white-space:pre;transform-origin:0 0;">J</div></div>
<div style="position:absolute;left:722px;top:250px;width:1px;height:19px;background:#c6c6c6;"></div>
<div style="position:absolute;left:658px;top:250px;width:64px;height:19px;overflow:hidden"><div style="position:absolute;left:27.72px;top:3.20px;font-size:13px;line-height:13px;color:#444444;white-space:pre;transform-origin:0 0;">K</div></div>
<div style="position:absolute;left:786px;top:250px;width:1px;height:19px;background:#c6c6c6;"></div>
<div style="position:absolute;left:722px;top:250px;width:64px;height:19px;overflow:hidden"><div style="position:absolute;left:28.57px;top:3.20px;font-size:13px;line-height:13px;color:#444444;white-space:pre;transform-origin:0 0;">L</div></div>
<div style="position:absolute;left:850px;top:250px;width:1px;height:19px;background:#c6c6c6;"></div>
<div style="position:absolute;left:786px;top:250px;width:64px;height:19px;overflow:hidden"><div style="position:absolute;left:27.10px;top:3.20px;font-size:13px;line-height:13px;color:#444444;white-space:pre;transform-origin:0 0;">M</div></div>
<div style="position:absolute;left:914px;top:250px;width:1px;height:19px;background:#c6c6c6;"></div>
<div style="position:absolute;left:850px;top:250px;width:64px;height:19px;overflow:hidden"><div style="position:absolute;left:27.82px;top:3.20px;font-size:13px;line-height:13px;color:#444444;white-space:pre;transform-origin:0 0;">N</div></div>
<div style="position:absolute;left:978px;top:250px;width:1px;height:19px;background:#c6c6c6;"></div>
<div style="position:absolute;left:914px;top:250px;width:64px;height:19px;overflow:hidden"><div style="position:absolute;left:27.46px;top:3.20px;font-size:13px;line-height:13px;color:#444444;white-space:pre;transform-origin:0 0;">O</div></div>
<div style="position:absolute;left:0px;top:289px;width:18px;height:1px;background:#c6c6c6;"></div>
<div style="position:absolute;left:19px;top:289px;width:980px;height:1px;background:#d4d4d4;"></div>
<div style="position:absolute;left:1.50px;top:273.70px;font-size:13px;line-height:13px;color:#444444;white-space:pre;transform-origin:0 0;">1</div>
<div style="position:absolute;left:0px;top:309px;width:18px;height:1px;background:#c6c6c6;"></div>
<div style="position:absolute;left:19px;top:309px;width:980px;height:1px;background:#d4d4d4;"></div>
<div style="position:absolute;left:1.69px;top:293.70px;font-size:13px;line-height:13px;color:#444444;white-space:pre;transform-origin:0 0;">2</div>
<div style="position:absolute;left:0px;top:329px;width:18px;height:1px;background:#c6c6c6;"></div>
<div style="position:absolute;left:19px;top:329px;width:980px;height:1px;background:#d4d4d4;"></div>
<div style="position:absolute;left:1.69px;top:313.70px;font-size:13px;line-height:13px;color:#444444;white-space:pre;transform-origin:0 0;">3</div>
<div style="position:absolute;left:0px;top:349px;width:18px;height:1px;background:#c6c6c6;"></div>
<div style="position:absolute;left:19px;top:349px;width:980px;height:1px;background:#d4d4d4;"></div>
<div style="position:absolute;left:1.76px;top:333.70px;font-size:13px;line-height:13px;color:#444444;white-space:pre;transform-origin:0 0;">4</div>
<div style="position:absolute;left:0px;top:369px;width:18px;height:1px;background:#c6c6c6;"></div>
<div style="position:absolute;left:19px;top:369px;width:980px;height:1px;background:#d4d4d4;"></div>
<div style="position:absolute;left:1.69px;top:353.70px;font-size:13px;line-height:13px;color:#444444;white-space:pre;transform-origin:0 0;">5</div>
<div style="position:absolute;left:0px;top:389px;width:18px;height:1px;background:#c6c6c6;"></div>
<div style="position:absolute;left:19px;top:389px;width:980px;height:1px;background:#d4d4d4;"></div>
<div style="position:absolute;left:1.63px;top:373.70px;font-size:13px;line-height:13px;color:#444444;white-space:pre;transform-origin:0 0;">6</div>
<div style="position:absolute;left:0px;top:409px;width:18px;height:1px;background:#c6c6c6;"></div>
<div style="position:absolute;left:19px;top:409px;width:980px;height:1px;background:#d4d4d4;"></div>
<div style="position:absolute;left:1.69px;top:393.70px;font-size:13px;line-height:13px;color:#444444;white-space:pre;transform-origin:0 0;">7</div>
<div style="position:absolute;left:0px;top:429px;width:18px;height:1px;background:#c6c6c6;"></div>
<div style="position:absolute;left:19px;top:429px;width:980px;height:1px;background:#d4d4d4;"></div>
<div style="position:absolute;left:1.66px;top:413.70px;font-size:13px;line-height:13px;color:#444444;white-space:pre;transform-origin:0 0;">8</div>
<div style="position:absolute;left:0px;top:449px;width:18px;height:1px;background:#c6c6c6;"></div>
<div style="position:absolute;left:19px;top:449px;width:980px;height:1px;background:#d4d4d4;"></div>
<div style="position:absolute;left:1.69px;top:433.70px;font-size:13px;line-height:13px;color:#444444;white-space:pre;transform-origin:0 0;">9</div>
<div style="position:absolute;left:0px;top:469px;width:18px;height:1px;background:#c6c6c6;"></div>
<div style="position:absolute;left:19px;top:469px;width:980px;height:1px;background:#d4d4d4;"></div>
<div style="position:absolute;left:1.72px;top:453.70px;font-size:13px;line-height:13px;color:#444444;white-space:pre;transform-origin:0 0;">10</div>
<div style="position:absolute;left:82px;top:270px;width:1px;height:19px;background:#d4d4d4;"></div>
<div style="position:absolute;left:82px;top:390px;width:1px;height:19px;background:#d4d4d4;"></div>
<div style="position:absolute;left:82px;top:410px;width:1px;height:19px;background:#d4d4d4;"></div>
<div style="position:absolute;left:82px;top:430px;width:1px;height:19px;background:#d4d4d4;"></div>
<div style="position:absolute;left:82px;top:450px;width:1px;height:19px;background:#d4d4d4;"></div>
<div style="position:absolute;left:146px;top:270px;width:1px;height:19px;background:#d4d4d4;"></div>
<div style="position:absolute;left:146px;top:290px;width:1px;height:19px;background:#d4d4d4;"></div>
<div style="position:absolute;left:146px;top:310px;width:1px;height:19px;background:#d4d4d4;"></div>
<div style="position:absolute;left:146px;top:330px;width:1px;height:19px;background:#d4d4d4;"></div>
<div style="position:absolute;left:146px;top:350px;width:1px;height:19px;background:#d4d4d4;"></div>
<div style="position:absolute;left:146px;top:370px;width:1px;height:19px;background:#d4d4d4;"></div>
<div style="position:absolute;left:146px;top:390px;width:1px;height:19px;background:#d4d4d4;"></div>
<div style="position:absolute;left:146px;top:410px;width:1px;height:19px;background:#d4d4d4;"></div>
<div style="position:absolute;left:146px;top:430px;width:1px;height:19px;background:#d4d4d4;"></div>
<div style="position:absolute;left:146px;top:450px;width:1px;height:19px;background:#d4d4d4;"></div>
<div style="position:absolute;left:210px;top:270px;width:1px;height:19px;background:#d4d4d4;"></div>
<div style="position:absolute;left:210px;top:290px;width:1px;height:19px;background:#d4d4d4;"></div>
<div style="position:absolute;left:210px;top:310px;width:1px;height:19px;background:#d4d4d4;"></div>
<div style="position:absolute;left:210px;top:330px;width:1px;height:19px;background:#d4d4d4;"></div>
<div style="position:absolute;left:210px;top:350px;width:1px;height:19px;background:#d4d4d4;"></div>
<div style="position:absolute;left:210px;top:370px;width:1px;height:19px;background:#d4d4d4;"></div>
<div style="position:absolute;left:210px;top:390px;width:1px;height:19px;background:#d4d4d4;"></div>
<div style="position:absolute;left:210px;top:410px;width:1px;height:19px;background:#d4d4d4;"></div>
<div style="position:absolute;left:210px;top:430px;width:1px;height:19px;background:#d4d4d4;"></div>
<div style="position:absolute;left:210px;top:450px;width:1px;height:19px;background:#d4d4d4;"></div>
<div style="position:absolute;left:274px;top:270px;width:1px;height:19px;background:#d4d4d4;"></div>
<div style="position:absolute;left:274px;top:290px;width:1px;height:19px;background:#d4d4d4;"></div>
<div style="position:absolute;left:274px;top:310px;width:1px;height:19px;background:#d4d4d4;"></div>
<div style="position:absolute;left:274px;top:330px;width:1px;height:19px;background:#d4d4d4;"></div>
<div style="position:absolute;left:274px;top:350px;width:1px;height:19px;background:#d4d4d4;"></div>
<div style="position:absolute;left:274px;top:370px;width:1px;height:19px;background:#d4d4d4;"></div>
<div style="position:absolute;left:274px;top:390px;width:1px;height:19px;background:#d4d4d4;"></div>
<div style="position:absolute;left:274px;top:410px;width:1px;height:19px;background:#d4d4d4;"></div>
<div style="position:absolute;left:274px;top:430px;width:1px;height:19px;background:#d4d4d4;"></div>
<div style="position:absolute;left:274px;top:450px;width:1px;height:19px;background:#d4d4d4;"></div>
<div style="position:absolute;left:338px;top:270px;width:1px;height:19px;background:#d4d4d4;"></div>
<div style="position:absolute;left:338px;top:290px;width:1px;height:19px;background:#d4d4d4;"></div>
<div style="position:absolute;left:338px;top:310px;width:1px;height:19px;background:#d4d4d4;"></div>
<div style="position:absolute;left:338px;top:330px;width:1px;height:19px;background:#d4d4d4;"></div>
<div style="position:absolute;left:338px;top:350px;width:1px;height:19px;background:#d4d4d4;"></div>
<div style="position:absolute;left:338px;top:370px;width:1px;height:19px;background:#d4d4d4;"></div>
<div style="position:absolute;left:338px;top:390px;width:1px;height:19px;background:#d4d4d4;"></div>
<div style="position:absolute;left:338px;top:410px;width:1px;height:19px;background:#d4d4d4;"></div>
<div style="position:absolute;left:338px;top:430px;width:1px;height:19px;background:#d4d4d4;"></div>
<div style="position:absolute;left:338px;top:450px;width:1px;height:19px;background:#d4d4d4;"></div>
<div style="position:absolute;left:402px;top:270px;width:1px;height:19px;background:#d4d4d4;"></div>
<div style="position:absolute;left:402px;top:290px;width:1px;height:19px;background:#d4d4d4;"></div>
<div style="position:absolute;left:402px;top:330px;width:1px;height:19px;background:#d4d4d4;"></div>
<div style="position:absolute;left:402px;top:350px;width:1px;height:19px;background:#d4d4d4;"></div>
<div style="position:absolute;left:402px;top:390px;width:1px;height:19px;background:#d4d4d4;"></div>
<div style="position:absolute;left:402px;top:410px;width:1px;height:19px;background:#d4d4d4;"></div>
<div style="position:absolute;left:402px;top:430px;width:1px;height:19px;background:#d4d4d4;"></div>
<div style="position:absolute;left:402px;top:450px;width:1px;height:19px;background:#d4d4d4;"></div>
<div style="position:absolute;left:466px;top:270px;width:1px;height:19px;background:#d4d4d4;"></div>
<div style="position:absolute;left:466px;top:290px;width:1px;height:19px;background:#d4d4d4;"></div>
<div style="position:absolute;left:466px;top:330px;width:1px;height:19px;background:#d4d4d4;"></div>
<div style="position:absolute;left:466px;top:350px;width:1px;height:19px;background:#d4d4d4;"></div>
<div style="position:absolute;left:466px;top:370px;width:1px;height:19px;background:#d4d4d4;"></div>
<div style="position:absolute;left:466px;top:390px;width:1px;height:19px;background:#d4d4d4;"></div>
<div style="position:absolute;left:466px;top:410px;width:1px;height:19px;background:#d4d4d4;"></div>
<div style="position:absolute;left:466px;top:430px;width:1px;height:19px;background:#d4d4d4;"></div>
<div style="position:absolute;left:466px;top:450px;width:1px;height:19px;background:#d4d4d4;"></div>
<div style="position:absolute;left:530px;top:270px;width:1px;height:19px;background:#d4d4d4;"></div>
<div style="position:absolute;left:530px;top:290px;width:1px;height:19px;background:#d4d4d4;"></div>
<div style="position:absolute;left:530px;top:310px;width:1px;height:19px;background:#d4d4d4;"></div>
<div style="position:absolute;left:530px;top:330px;width:1px;height:19px;background:#d4d4d4;"></div>
<div style="position:absolute;left:530px;top:350px;width:1px;height:19px;background:#d4d4d4;"></div>
<div style="position:absolute;left:530px;top:370px;width:1px;height:19px;background:#d4d4d4;"></div>
<div style="position:absolute;left:530px;top:390px;width:1px;height:19px;background:#d4d4d4;"></div>
<div style="position:absolute;left:530px;top:410px;width:1px;height:19px;background:#d4d4d4;"></div>
<div style="position:absolute;left:530px;top:430px;width:1px;height:19px;background:#d4d4d4;"></div>
<div style="position:absolute;left:530px;top:450px;width:1px;height:19px;background:#d4d4d4;"></div>
<div style="position:absolute;left:594px;top:270px;width:1px;height:19px;background:#d4d4d4;"></div>
<div style="position:absolute;left:594px;top:290px;width:1px;height:19px;background:#d4d4d4;"></div>
<div style="position:absolute;left:594px;top:310px;width:1px;height:19px;background:#d4d4d4;"></div>
<div style="position:absolute;left:594px;top:330px;width:1px;height:19px;background:#d4d4d4;"></div>
<div style="position:absolute;left:594px;top:350px;width:1px;height:19px;background:#d4d4d4;"></div>
<div style="position:absolute;left:594px;top:370px;width:1px;height:19px;background:#d4d4d4;"></div>
<div style="position:absolute;left:594px;top:390px;width:1px;height:19px;background:#d4d4d4;"></div>
<div style="position:absolute;left:594px;top:410px;width:1px;height:19px;background:#d4d4d4;"></div>
<div style="position:absolute;left:594px;top:430px;width:1px;height:19px;background:#d4d4d4;"></div>
<div style="position:absolute;left:594px;top:450px;width:1px;height:19px;background:#d4d4d4;"></div>
<div style="position:absolute;left:658px;top:270px;width:1px;height:19px;background:#d4d4d4;"></div>
<div style="position:absolute;left:658px;top:390px;width:1px;height:19px;background:#d4d4d4;"></div>
<div style="position:absolute;left:658px;top:410px;width:1px;height:19px;background:#d4d4d4;"></div>
<div style="position:absolute;left:658px;top:430px;width:1px;height:19px;background:#d4d4d4;"></div>
<div style="position:absolute;left:658px;top:450px;width:1px;height:19px;background:#d4d4d4;"></div>
<div style="position:absolute;left:722px;top:270px;width:1px;height:19px;background:#d4d4d4;"></div>
<div style="position:absolute;left:722px;top:290px;width:1px;height:19px;background:#d4d4d4;"></div>
<div style="position:absolute;left:722px;top:310px;width:1px;height:19px;background:#d4d4d4;"></div>
<div style="position:absolute;left:722px;top:330px;width:1px;height:19px;background:#d4d4d4;"></div>
<div style="position:absolute;left:722px;top:350px;width:1px;height:19px;background:#d4d4d4;"></div>
<div style="position:absolute;left:722px;top:370px;width:1px;height:19px;background:#d4d4d4;"></div>
<div style="position:absolute;left:722px;top:390px;width:1px;height:19px;background:#d4d4d4;"></div>
<div style="position:absolute;left:722px;top:410px;width:1px;height:19px;background:#d4d4d4;"></div>
<div style="position:absolute;left:722px;top:430px;width:1px;height:19px;background:#d4d4d4;"></div>
<div style="position:absolute;left:722px;top:450px;width:1px;height:19px;background:#d4d4d4;"></div>
<div style="position:absolute;left:786px;top:270px;width:1px;height:19px;background:#d4d4d4;"></div>
<div style="position:absolute;left:786px;top:290px;width:1px;height:19px;background:#d4d4d4;"></div>
<div style="position:absolute;left:786px;top:310px;width:1px;height:19px;background:#d4d4d4;"></div>
<div style="position:absolute;left:786px;top:330px;width:1px;height:19px;background:#d4d4d4;"></div>
<div style="position:absolute;left:786px;top:350px;width:1px;height:19px;background:#d4d4d4;"></div>
<div style="position:absolute;left:786px;top:370px;width:1px;height:19px;background:#d4d4d4;"></div>
<div style="position:absolute;left:786px;top:390px;width:1px;height:19px;background:#d4d4d4;"></div>
<div style="position:absolute;left:786px;top:410px;width:1px;height:19px;background:#d4d4d4;"></div>
<div style="position:absolute;left:786px;top:430px;width:1px;height:19px;background:#d4d4d4;"></div>
<div style="position:absolute;left:786px;top:450px;width:1px;height:19px;background:#d4d4d4;"></div>
<div style="position:absolute;left:850px;top:270px;width:1px;height:19px;background:#d4d4d4;"></div>
<div style="position:absolute;left:850px;top:290px;width:1px;height:19px;background:#d4d4d4;"></div>
<div style="position:absolute;left:850px;top:310px;width:1px;height:19px;background:#d4d4d4;"></div>
<div style="position:absolute;left:850px;top:330px;width:1px;height:19px;background:#d4d4d4;"></div>
<div style="position:absolute;left:850px;top:350px;width:1px;height:19px;background:#d4d4d4;"></div>
<div style="position:absolute;left:850px;top:370px;width:1px;height:19px;background:#d4d4d4;"></div>
<div style="position:absolute;left:850px;top:390px;width:1px;height:19px;background:#d4d4d4;"></div>
<div style="position:absolute;left:850px;top:410px;width:1px;height:19px;background:#d4d4d4;"></div>
<div style="position:absolute;left:850px;top:430px;width:1px;height:19px;background:#d4d4d4;"></div>
<div style="position:absolute;left:850px;top:450px;width:1px;height:19px;background:#d4d4d4;"></div>
<div style="position:absolute;left:914px;top:270px;width:1px;height:19px;background:#d4d4d4;"></div>
<div style="position:absolute;left:914px;top:290px;width:1px;height:19px;background:#d4d4d4;"></div>
<div style="position:absolute;left:914px;top:310px;width:1px;height:19px;background:#d4d4d4;"></div>
<div style="position:absolute;left:914px;top:330px;width:1px;height:19px;background:#d4d4d4;"></div>
<div style="position:absolute;left:914px;top:350px;width:1px;height:19px;background:#d4d4d4;"></div>
<div style="position:absolute;left:914px;top:370px;width:1px;height:19px;background:#d4d4d4;"></div>
<div style="position:absolute;left:914px;top:390px;width:1px;height:19px;background:#d4d4d4;"></div>
<div style="position:absolute;left:914px;top:410px;width:1px;height:19px;background:#d4d4d4;"></div>
<div style="position:absolute;left:914px;top:430px;width:1px;height:19px;background:#d4d4d4;"></div>
<div style="position:absolute;left:914px;top:450px;width:1px;height:19px;background:#d4d4d4;"></div>
<div style="position:absolute;left:978px;top:270px;width:1px;height:19px;background:#d4d4d4;"></div>
<div style="position:absolute;left:978px;top:290px;width:1px;height:19px;background:#d4d4d4;"></div>
<div style="position:absolute;left:978px;top:310px;width:1px;height:19px;background:#d4d4d4;"></div>
<div style="position:absolute;left:978px;top:330px;width:1px;height:19px;background:#d4d4d4;"></div>
<div style="position:absolute;left:978px;top:350px;width:1px;height:19px;background:#d4d4d4;"></div>
<div style="position:absolute;left:978px;top:370px;width:1px;height:19px;background:#d4d4d4;"></div>
<div style="position:absolute;left:978px;top:390px;width:1px;height:19px;background:#d4d4d4;"></div>
<div style="position:absolute;left:978px;top:410px;width:1px;height:19px;background:#d4d4d4;"></div>
<div style="position:absolute;left:978px;top:430px;width:1px;height:19px;background:#d4d4d4;"></div>
<div style="position:absolute;left:978px;top:450px;width:1px;height:19px;background:#d4d4d4;"></div>
<div style="position:absolute;left:19px;top:270px;width:63px;height:20px;overflow:hidden"><div style="position:absolute;left:1.92px;top:3.90px;font-size:13px;line-height:13px;color:#000000;white-space:pre;transform-origin:0 0;transform:scaleX(1.0372);-webkit-text-stroke:0.3px #000000;">DeviceID</div></div>
<div style="position:absolute;left:83px;top:270px;width:63px;height:20px;overflow:hidden"><div style="position:absolute;left:2.34px;top:3.90px;font-size:13px;line-height:13px;color:#000000;white-space:pre;transform-origin:0 0;transform:scaleX(1.0228);-webkit-text-stroke:0.3px #000000;">CameraID</div></div>
<div style="position:absolute;left:147px;top:270px;width:63px;height:20px;overflow:hidden"><div style="position:absolute;left:1.88px;top:3.90px;font-size:13px;line-height:13px;color:#000000;white-space:pre;transform-origin:0 0;transform:scaleX(1.0789);-webkit-text-stroke:0.3px #000000;">Name</div></div>
<div style="position:absolute;left:211px;top:270px;width:63px;height:20px;overflow:hidden"><div style="position:absolute;left:2.32px;top:3.90px;font-size:13px;line-height:13px;color:#000000;white-space:pre;transform-origin:0 0;transform:scaleX(1.0429);-webkit-text-stroke:0.3px #000000;">Camera id</div></div>
<div style="position:absolute;left:275px;top:270px;width:63px;height:20px;overflow:hidden"><div style="position:absolute;left:2.32px;top:3.90px;font-size:13px;line-height:13px;color:#000000;white-space:pre;transform-origin:0 0;transform:scaleX(1.0429);-webkit-text-stroke:0.3px #000000;">Camera id</div></div>
<div style="position:absolute;left:339px;top:270px;width:63px;height:20px;overflow:hidden"><div style="position:absolute;left:2.32px;top:3.90px;font-size:13px;line-height:13px;color:#000000;white-space:pre;transform-origin:0 0;transform:scaleX(1.0429);-webkit-text-stroke:0.3px #000000;">Camera id</div></div>
<div style="position:absolute;left:403px;top:270px;width:63px;height:20px;overflow:hidden"><div style="position:absolute;left:2.32px;top:3.90px;font-size:13px;line-height:13px;color:#000000;white-space:pre;transform-origin:0 0;transform:scaleX(1.0429);-webkit-text-stroke:0.3px #000000;">Camera id</div></div>
<div style="position:absolute;left:467px;top:270px;width:63px;height:20px;overflow:hidden"><div style="position:absolute;left:2.32px;top:3.90px;font-size:13px;line-height:13px;color:#000000;white-space:pre;transform-origin:0 0;transform:scaleX(1.0429);-webkit-text-stroke:0.3px #000000;">Camera id</div></div>
<div style="position:absolute;left:531px;top:270px;width:63px;height:20px;overflow:hidden"><div style="position:absolute;left:2.32px;top:3.90px;font-size:13px;line-height:13px;color:#000000;white-space:pre;transform-origin:0 0;transform:scaleX(1.0429);-webkit-text-stroke:0.3px #000000;">Camera id</div></div>
<div style="position:absolute;left:595px;top:270px;width:63px;height:20px;overflow:hidden"><div style="position:absolute;left:2.32px;top:3.90px;font-size:13px;line-height:13px;color:#000000;white-space:pre;transform-origin:0 0;transform:scaleX(1.0429);-webkit-text-stroke:0.3px #000000;">Camera id</div></div>
<div style="position:absolute;left:659px;top:270px;width:63px;height:20px;overflow:hidden"><div style="position:absolute;left:2.32px;top:3.90px;font-size:13px;line-height:13px;color:#000000;white-space:pre;transform-origin:0 0;transform:scaleX(1.0429);-webkit-text-stroke:0.3px #000000;">Camera id</div></div>
<div style="position:absolute;left:723px;top:270px;width:63px;height:20px;overflow:hidden"><div style="position:absolute;left:2.32px;top:3.90px;font-size:13px;line-height:13px;color:#000000;white-space:pre;transform-origin:0 0;transform:scaleX(1.0429);-webkit-text-stroke:0.3px #000000;">Camera id</div></div>
<div style="position:absolute;left:787px;top:270px;width:63px;height:20px;overflow:hidden"><div style="position:absolute;left:1.94px;top:3.90px;font-size:13px;line-height:13px;color:#000000;white-space:pre;transform-origin:0 0;transform:scaleX(1.0208);-webkit-text-stroke:0.3px #000000;">Device acce</div></div>
<div style="position:absolute;left:851px;top:270px;width:63px;height:20px;overflow:hidden"><div style="position:absolute;left:1.94px;top:3.90px;font-size:13px;line-height:13px;color:#000000;white-space:pre;transform-origin:0 0;transform:scaleX(1.0208);-webkit-text-stroke:0.3px #000000;">Device acce</div></div>
<div style="position:absolute;left:915px;top:270px;width:63px;height:20px;overflow:hidden"><div style="position:absolute;left:1.94px;top:3.90px;font-size:13px;line-height:13px;color:#000000;white-space:pre;transform-origin:0 0;transform:scaleX(1.0208);-webkit-text-stroke:0.3px #000000;">Device acce</div></div>
<div style="position:absolute;left:979px;top:270px;width:20px;height:20px;overflow:hidden"><div style="position:absolute;left:1.91px;top:3.90px;font-size:13px;line-height:13px;color:#000000;white-space:pre;transform-origin:0 0;transform:scaleX(1.0506);-webkit-text-stroke:0.3px #000000;">Device</div></div>
<div style="position:absolute;left:19px;top:290px;width:127px;height:20px;overflow:hidden"><div style="position:absolute;left:2.04px;top:3.90px;font-size:13px;line-height:13px;color:#000000;white-space:pre;transform-origin:0 0;transform:scaleX(0.9858);-webkit-text-stroke:0.3px #000000;">192.168.1.45</div></div>
<div style="position:absolute;left:147px;top:290px;width:63px;height:20px;overflow:hidden"><div style="position:absolute;left:2.04px;top:3.90px;font-size:13px;line-height:13px;color:#000000;white-space:pre;transform-origin:0 0;transform:scaleX(0.9858);-webkit-text-stroke:0.3px #000000;">192.168.1.45</div></div>
<div style="position:absolute;left:211px;top:290px;width:63px;height:20px;overflow:hidden"><div style="position:absolute;left:1.91px;top:3.90px;font-size:13px;line-height:13px;color:#000000;white-space:pre;transform-origin:0 0;transform:scaleX(1.0466);-webkit-text-stroke:0.3px #000000;">MIC inteox 7100i</div></div>
<div style="position:absolute;left:275px;top:290px;width:63px;height:20px;overflow:hidden"><div style="position:absolute;left:1.96px;top:3.90px;font-size:13px;line-height:13px;color:#000000;white-space:pre;transform-origin:0 0;-webkit-text-stroke:0.3px #000000;">MIC-7602-Z0</div></div>
<div style="position:absolute;left:339px;top:290px;width:191px;height:20px;overflow:hidden"><div style="position:absolute;left:2.34px;top:3.90px;font-size:13px;line-height:13px;color:#000000;white-space:pre;transform-origin:0 0;transform:scaleX(1.0142);-webkit-text-stroke:0.3px #000000;">Camera 1</div></div>
<div style="position:absolute;left:531px;top:290px;width:63px;height:20px;overflow:hidden"><div style="position:absolute;left:2.04px;top:3.90px;font-size:13px;line-height:13px;color:#000000;white-space:pre;transform-origin:0 0;transform:scaleX(0.9858);-webkit-text-stroke:0.3px #000000;">192.168.1.45</div></div>
<div style="position:absolute;left:595px;top:290px;width:127px;height:20px;overflow:hidden"><div style="position:absolute;left:2.13px;top:3.90px;font-size:13px;line-height:13px;color:#000000;white-space:pre;transform-origin:0 0;transform:scaleX(1.0343);-webkit-text-stroke:0.3px #000000;">iqn.2005-12.com.bosch</div></div>
<div style="position:absolute;left:723px;top:290px;width:63px;height:20px;overflow:hidden"><div style="position:absolute;left:2.49px;top:3.90px;font-size:13px;line-height:13px;color:#000000;white-space:pre;transform-origin:0 0;transform:scaleX(0.9770);-webkit-text-stroke:0.3px #000000;">00-07-5F-8A-1B</div></div>
<div style="position:absolute;left:787px;top:290px;width:63px;height:20px;overflow:hidden"><div style="position:absolute;left:2.04px;top:3.90px;font-size:13px;line-height:13px;color:#000000;white-space:pre;transform-origin:0 0;transform:scaleX(0.9858);-webkit-text-stroke:0.3px #000000;">192.168.1.45</div></div>
<div style="position:absolute;left:851px;top:290px;width:63px;height:20px;overflow:hidden"><div style="position:absolute;left:2.04px;top:3.90px;font-size:13px;line-height:13px;color:#000000;white-space:pre;transform-origin:0 0;transform:scaleX(0.9258);-webkit-text-stroke:0.3px #000000;">HTTPS</div></div>
<div style="position:absolute;left:915px;top:290px;width:63px;height:20px;overflow:hidden"><div style="position:absolute;left:39.69px;top:3.90px;font-size:13px;line-height:13px;color:#000000;white-space:pre;transform-origin:0 0;transform:scaleX(0.9754);-webkit-text-stroke:0.3px #000000;">443</div></div>
<div style="position:absolute;left:979px;top:290px;width:20px;height:20px;overflow:hidden"><div style="position:absolute;left:2.59px;top:3.90px;font-size:13px;line-height:13px;color:#000000;white-space:pre;transform-origin:0 0;transform:scaleX(1.0425);-webkit-text-stroke:0.3px #000000;">service</div></div>
<div style="position:absolute;left:19px;top:310px;width:127px;height:20px;overflow:hidden"><div style="position:absolute;left:2.04px;top:3.90px;font-size:13px;line-height:13px;color:#000000;white-space:pre;transform-origin:0 0;transform:scaleX(0.9849);-webkit-text-stroke:0.3px #000000;">192.168.1.30</div></div>
<div style="position:absolute;left:147px;top:310px;width:63px;height:20px;overflow:hidden"><div style="position:absolute;left:2.34px;top:3.90px;font-size:13px;line-height:13px;color:#000000;white-space:pre;transform-origin:0 0;transform:scaleX(1.0168);-webkit-text-stroke:0.3px #000000;">Camera</div></div>
<div style="position:absolute;left:211px;top:310px;width:63px;height:20px;overflow:hidden"><div style="position:absolute;left:3.00px;top:3.90px;font-size:13px;line-height:13px;color:#000000;white-space:pre;transform-origin:0 0;transform:scaleX(0.9961);-webkit-text-stroke:0.3px #000000;">AUTODOME</div></div>
<div style="position:absolute;left:275px;top:310px;width:63px;height:20px;overflow:hidden"><div style="position:absolute;left:1.98px;top:3.90px;font-size:13px;line-height:13px;color:#000000;white-space:pre;transform-origin:0 0;transform:scaleX(0.9762);-webkit-text-stroke:0.3px #000000;">NDP-7602-Z30</div></div>
<div style="position:absolute;left:339px;top:310px;width:191px;height:20px;overflow:hidden"><div style="position:absolute;left:2.36px;top:3.90px;font-size:13px;line-height:13px;color:#000000;white-space:pre;transform-origin:0 0;transform:scaleX(0.9920);-webkit-text-stroke:0.3px #000000;">Camera 3 (192.168.1.219)</div></div>
<div style="position:absolute;left:531px;top:310px;width:63px;height:20px;overflow:hidden"><div style="position:absolute;left:2.34px;top:3.90px;font-size:13px;line-height:13px;color:#000000;white-space:pre;transform-origin:0 0;transform:scaleX(1.0168);-webkit-text-stroke:0.3px #000000;">Camera</div></div>
<div style="position:absolute;left:595px;top:310px;width:127px;height:20px;overflow:hidden"><div style="position:absolute;left:2.13px;top:3.90px;font-size:13px;line-height:13px;color:#000000;white-space:pre;transform-origin:0 0;transform:scaleX(1.0343);-webkit-text-stroke:0.3px #000000;">iqn.2005-12.com.bosch</div></div>
<div style="position:absolute;left:723px;top:310px;width:63px;height:20px;overflow:hidden"><div style="position:absolute;left:2.49px;top:3.90px;font-size:13px;line-height:13px;color:#000000;white-space:pre;transform-origin:0 0;transform:scaleX(0.9770);-webkit-text-stroke:0.3px #000000;">00-07-5F-8A-1B</div></div>
<div style="position:absolute;left:787px;top:310px;width:63px;height:20px;overflow:hidden"><div style="position:absolute;left:2.04px;top:3.90px;font-size:13px;line-height:13px;color:#000000;white-space:pre;transform-origin:0 0;transform:scaleX(0.9849);-webkit-text-stroke:0.3px #000000;">192.168.1.30</div></div>
<div style="position:absolute;left:851px;top:310px;width:63px;height:20px;overflow:hidden"><div style="position:absolute;left:2.04px;top:3.90px;font-size:13px;line-height:13px;color:#000000;white-space:pre;transform-origin:0 0;transform:scaleX(0.9258);-webkit-text-stroke:0.3px #000000;">HTTPS</div></div>
<div style="position:absolute;left:915px;top:310px;width:63px;height:20px;overflow:hidden"><div style="position:absolute;left:39.69px;top:3.90px;font-size:13px;line-height:13px;color:#000000;white-space:pre;transform-origin:0 0;transform:scaleX(0.9754);-webkit-text-stroke:0.3px #000000;">443</div></div>
<div style="position:absolute;left:979px;top:310px;width:20px;height:20px;overflow:hidden"><div style="position:absolute;left:2.59px;top:3.90px;font-size:13px;line-height:13px;color:#000000;white-space:pre;transform-origin:0 0;transform:scaleX(1.0425);-webkit-text-stroke:0.3px #000000;">service</div></div>
<div style="position:absolute;left:19px;top:330px;width:127px;height:20px;overflow:hidden"><div style="position:absolute;left:2.04px;top:3.90px;font-size:13px;line-height:13px;color:#000000;white-space:pre;transform-origin:0 0;transform:scaleX(0.9858);-webkit-text-stroke:0.3px #000000;">192.168.1.36</div></div>
<div style="position:absolute;left:147px;top:330px;width:63px;height:20px;overflow:hidden"><div style="position:absolute;left:2.04px;top:3.90px;font-size:13px;line-height:13px;color:#000000;white-space:pre;transform-origin:0 0;transform:scaleX(0.9858);-webkit-text-stroke:0.3px #000000;">192.168.1.36</div></div>
<div style="position:absolute;left:211px;top:330px;width:63px;height:20px;overflow:hidden"><div style="position:absolute;left:1.95px;top:3.90px;font-size:13px;line-height:13px;color:#000000;white-space:pre;transform-origin:0 0;transform:scaleX(1.0087);-webkit-text-stroke:0.3px #000000;">DINION IP</div></div>
<div style="position:absolute;left:275px;top:330px;width:63px;height:20px;overflow:hidden"><div style="position:absolute;left:1.96px;top:3.90px;font-size:13px;line-height:13px;color:#000000;white-space:pre;transform-origin:0 0;transform:scaleX(1.0034);-webkit-text-stroke:0.3px #000000;">NBN-7101</div></div>
<div style="position:absolute;left:339px;top:330px;width:255px;height:20px;overflow:hidden"><div style="position:absolute;left:2.34px;top:3.90px;font-size:13px;line-height:13px;color:#000000;white-space:pre;transform-origin:0 0;transform:scaleX(1.0142);-webkit-text-stroke:0.3px #000000;">Camera 1</div></div>
<div style="position:absolute;left:595px;top:330px;width:127px;height:20px;overflow:hidden"><div style="position:absolute;left:2.13px;top:3.90px;font-size:13px;line-height:13px;color:#000000;white-space:pre;transform-origin:0 0;transform:scaleX(1.0343);-webkit-text-stroke:0.3px #000000;">iqn.2005-12.com.bosch</div></div>
<div style="position:absolute;left:723px;top:330px;width:63px;height:20px;overflow:hidden"><div style="position:absolute;left:2.49px;top:3.90px;font-size:13px;line-height:13px;color:#000000;white-space:pre;transform-origin:0 0;transform:scaleX(0.9770);-webkit-text-stroke:0.3px #000000;">00-07-5F-8A-1B</div></div>
<div style="position:absolute;left:787px;top:330px;width:63px;height:20px;overflow:hidden"><div style="position:absolute;left:2.04px;top:3.90px;font-size:13px;line-height:13px;color:#000000;white-space:pre;transform-origin:0 0;transform:scaleX(0.9858);-webkit-text-stroke:0.3px #000000;">192.168.1.36</div></div>
<div style="position:absolute;left:851px;top:330px;width:63px;height:20px;overflow:hidden"><div style="position:absolute;left:2.04px;top:3.90px;font-size:13px;line-height:13px;color:#000000;white-space:pre;transform-origin:0 0;transform:scaleX(0.9258);-webkit-text-stroke:0.3px #000000;">HTTPS</div></div>
<div style="position:absolute;left:915px;top:330px;width:63px;height:20px;overflow:hidden"><div style="position:absolute;left:39.69px;top:3.90px;font-size:13px;line-height:13px;color:#000000;white-space:pre;transform-origin:0 0;transform:scaleX(0.9754);-webkit-text-stroke:0.3px #000000;">443</div></div>
<div style="position:absolute;left:979px;top:330px;width:20px;height:20px;overflow:hidden"><div style="position:absolute;left:2.59px;top:3.90px;font-size:13px;line-height:13px;color:#000000;white-space:pre;transform-origin:0 0;transform:scaleX(1.0425);-webkit-text-stroke:0.3px #000000;">service</div></div>
<div style="position:absolute;left:19px;top:350px;width:127px;height:20px;overflow:hidden"><div style="position:absolute;left:2.04px;top:3.90px;font-size:13px;line-height:13px;color:#000000;white-space:pre;transform-origin:0 0;transform:scaleX(0.9875);-webkit-text-stroke:0.3px #000000;">192.168.1.47</div></div>
<div style="position:absolute;left:147px;top:350px;width:63px;height:20px;overflow:hidden"><div style="position:absolute;left:2.04px;top:3.90px;font-size:13px;line-height:13px;color:#000000;white-space:pre;transform-origin:0 0;transform:scaleX(0.9875);-webkit-text-stroke:0.3px #000000;">192.168.1.47</div></div>
<div style="position:absolute;left:211px;top:350px;width:63px;height:20px;overflow:hidden"><div style="position:absolute;left:1.91px;top:3.90px;font-size:13px;line-height:13px;color:#000000;white-space:pre;transform-origin:0 0;transform:scaleX(1.0528);-webkit-text-stroke:0.3px #000000;">MIC IP starlight</div></div>
<div style="position:absolute;left:275px;top:350px;width:63px;height:20px;overflow:hidden"><div style="position:absolute;left:1.94px;top:3.90px;font-size:13px;line-height:13px;color:#000000;white-space:pre;transform-origin:0 0;transform:scaleX(1.0177);-webkit-text-stroke:0.3px #000000;">MIC-7130-</div></div>
<div style="position:absolute;left:339px;top:350px;width:191px;height:20px;overflow:hidden"><div style="position:absolute;left:2.34px;top:3.90px;font-size:13px;line-height:13px;color:#000000;white-space:pre;transform-origin:0 0;transform:scaleX(1.0142);-webkit-text-stroke:0.3px #000000;">Camera 1</div></div>
<div style="position:absolute;left:531px;top:350px;width:63px;height:20px;overflow:hidden"><div style="position:absolute;left:2.04px;top:3.90px;font-size:13px;line-height:13px;color:#000000;white-space:pre;transform-origin:0 0;transform:scaleX(0.9875);-webkit-text-stroke:0.3px #000000;">192.168.1.47</div></div>
<div style="position:absolute;left:595px;top:350px;width:127px;height:20px;overflow:hidden"><div style="position:absolute;left:2.13px;top:3.90px;font-size:13px;line-height:13px;color:#000000;white-space:pre;transform-origin:0 0;transform:scaleX(1.0343);-webkit-text-stroke:0.3px #000000;">iqn.2005-12.com.bosch</div></div>
<div style="position:absolute;left:723px;top:350px;width:63px;height:20px;overflow:hidden"><div style="position:absolute;left:2.49px;top:3.90px;font-size:13px;line-height:13px;color:#000000;white-space:pre;transform-origin:0 0;transform:scaleX(0.9770);-webkit-text-stroke:0.3px #000000;">00-07-5F-8A-1B</div></div>
<div style="position:absolute;left:787px;top:350px;width:63px;height:20px;overflow:hidden"><div style="position:absolute;left:2.04px;top:3.90px;font-size:13px;line-height:13px;color:#000000;white-space:pre;transform-origin:0 0;transform:scaleX(0.9875);-webkit-text-stroke:0.3px #000000;">192.168.1.47</div></div>
<div style="position:absolute;left:851px;top:350px;width:63px;height:20px;overflow:hidden"><div style="position:absolute;left:2.04px;top:3.90px;font-size:13px;line-height:13px;color:#000000;white-space:pre;transform-origin:0 0;transform:scaleX(0.9258);-webkit-text-stroke:0.3px #000000;">HTTPS</div></div>
<div style="position:absolute;left:915px;top:350px;width:63px;height:20px;overflow:hidden"><div style="position:absolute;left:39.69px;top:3.90px;font-size:13px;line-height:13px;color:#000000;white-space:pre;transform-origin:0 0;transform:scaleX(0.9754);-webkit-text-stroke:0.3px #000000;">443</div></div>
<div style="position:absolute;left:979px;top:350px;width:20px;height:20px;overflow:hidden"><div style="position:absolute;left:2.59px;top:3.90px;font-size:13px;line-height:13px;color:#000000;white-space:pre;transform-origin:0 0;transform:scaleX(1.0425);-webkit-text-stroke:0.3px #000000;">service</div></div>
<div style="position:absolute;left:19px;top:370px;width:127px;height:20px;overflow:hidden"><div style="position:absolute;left:2.04px;top:3.90px;font-size:13px;line-height:13px;color:#000000;white-space:pre;transform-origin:0 0;transform:scaleX(0.9841);-webkit-text-stroke:0.3px #000000;">192.168.1.44</div></div>
<div style="position:absolute;left:147px;top:370px;width:63px;height:20px;overflow:hidden"><div style="position:absolute;left:2.04px;top:3.90px;font-size:13px;line-height:13px;color:#000000;white-space:pre;transform-origin:0 0;transform:scaleX(0.9841);-webkit-text-stroke:0.3px #000000;">192.168.1.44</div></div>
<div style="position:absolute;left:211px;top:370px;width:63px;height:20px;overflow:hidden"><div style="position:absolute;left:2.00px;top:3.90px;font-size:13px;line-height:13px;color:#000000;white-space:pre;transform-origin:0 0;transform:scaleX(0.9607);-webkit-text-stroke:0.3px #000000;">FLEXIDOME</div></div>
<div style="position:absolute;left:275px;top:370px;width:63px;height:20px;overflow:hidden"><div style="position:absolute;left:1.92px;top:3.90px;font-size:13px;line-height:13px;color:#000000;white-space:pre;transform-origin:0 0;transform:scaleX(1.0357);-webkit-text-stroke:0.3px #000000;">NDM-7703</div></div>
<div style="position:absolute;left:339px;top:370px;width:191px;height:20px;overflow:hidden"><div style="position:absolute;left:1.89px;top:3.90px;font-size:13px;line-height:13px;color:#000000;white-space:pre;transform-origin:0 0;transform:scaleX(1.0626);-webkit-text-stroke:0.3px #000000;">Multi 7000 1</div></div>
<div style="position:absolute;left:531px;top:370px;width:63px;height:20px;overflow:hidden"><div style="position:absolute;left:2.04px;top:3.90px;font-size:13px;line-height:13px;color:#000000;white-space:pre;transform-origin:0 0;transform:scaleX(0.9841);-webkit-text-stroke:0.3px #000000;">192.168.1.44</div></div>
<div style="position:absolute;left:595px;top:370px;width:127px;height:20px;overflow:hidden"><div style="position:absolute;left:2.13px;top:3.90px;font-size:13px;line-height:13px;color:#000000;white-space:pre;transform-origin:0 0;transform:scaleX(1.0343);-webkit-text-stroke:0.3px #000000;">iqn.2005-12.com.bosch</div></div>
<div style="position:absolute;left:723px;top:370px;width:63px;height:20px;overflow:hidden"><div style="position:absolute;left:2.50px;top:3.90px;font-size:13px;line-height:13px;color:#000000;white-space:pre;transform-origin:0 0;transform:scaleX(0.9622);-webkit-text-stroke:0.3px #000000;">00-07-5F-C1-2B</div></div>
<div style="position:absolute;left:787px;top:370px;width:63px;height:20px;overflow:hidden"><div style="position:absolute;left:2.04px;top:3.90px;font-size:13px;line-height:13px;color:#000000;white-space:pre;transform-origin:0 0;transform:scaleX(0.9841);-webkit-text-stroke:0.3px #000000;">192.168.1.44</div></div>
<div style="position:absolute;left:851px;top:370px;width:63px;height:20px;overflow:hidden"><div style="position:absolute;left:2.04px;top:3.90px;font-size:13px;line-height:13px;color:#000000;white-space:pre;transform-origin:0 0;transform:scaleX(0.9258);-webkit-text-stroke:0.3px #000000;">HTTPS</div></div>
<div style="position:absolute;left:915px;top:370px;width:63px;height:20px;overflow:hidden"><div style="position:absolute;left:39.69px;top:3.90px;font-size:13px;line-height:13px;color:#000000;white-space:pre;transform-origin:0 0;transform:scaleX(0.9754);-webkit-text-stroke:0.3px #000000;">443</div></div>
<div style="position:absolute;left:979px;top:370px;width:20px;height:20px;overflow:hidden"><div style="position:absolute;left:2.59px;top:3.90px;font-size:13px;line-height:13px;color:#000000;white-space:pre;transform-origin:0 0;transform:scaleX(1.0425);-webkit-text-stroke:0.3px #000000;">service</div></div>
<div style="position:absolute;left:999px;top:250px;width:4px;height:218px;background:#e6e6e6;"></div>
<div style="position:absolute;left:999px;top:269px;width:1px;height:199px;background:#bdbdbd;"></div>
<div style="position:absolute;left:1003px;top:252px;width:15px;height:15px;background:#ffffff;box-sizing:border-box;border:1px solid #a0a0a0"></div>
<svg style="position:absolute;left:1006px;top:257px;" width="9" height="5" viewBox="0 0 9 5"><polygon points="0,5 4.5,0 9,5" fill="#777"/></svg>
<div style="position:absolute;left:1003px;top:267px;width:15px;height:201px;background:#ffffff;box-sizing:border-box;border:1px solid #a0a0a0;border-left-width:1.5px;border-right-width:1.5px"></div>
<div style="position:absolute;left:1000px;top:83px;width:22px;height:385px;background:linear-gradient(90deg,rgba(0,0,0,0),rgba(0,0,0,0.10))"></div>
<div style="position:absolute;left:1021px;top:0px;width:1px;height:468px;background:#8a8f8c;"></div>
<div style="position:absolute;left:1022px;top:0px;width:1px;height:468px;background:#3f7aa3;"></div>
<div style="position:absolute;left:1023px;top:0px;width:894px;height:83px;background:#217346;"></div>
<div style="position:absolute;left:1023px;top:0;width:894px;height:83px;overflow:hidden"><svg style="position:absolute;left:-127px;top:0px;" width="1030" height="83" viewBox="0 0 1030 83"><rect x="400" y="0" width="5" height="40" fill="#1f6a41" opacity="0.65"/><rect x="420" y="0" width="4" height="42" fill="#1f6a41" opacity="0.65"/><rect x="437" y="0" width="9" height="50" fill="#1f6a41" opacity="0.65"/><rect x="471" y="0" width="3" height="50" fill="#1f6a41" opacity="0.65"/><rect x="486" y="0" width="27" height="53" fill="#1f6a41" opacity="0.65"/><rect x="516" y="0" width="15" height="53" fill="#1f6a41" opacity="0.65"/><rect x="545" y="0" width="7" height="48" fill="#1f6a41" opacity="0.65"/><rect x="560" y="0" width="5" height="48" fill="#1f6a41" opacity="0.65"/><rect x="575" y="0" width="4" height="45" fill="#1f6a41" opacity="0.65"/><rect x="588" y="0" width="3" height="45" fill="#1f6a41" opacity="0.65"/><rect x="611" y="-30" width="150" height="58" rx="28" fill="#1f6a41"/><circle cx="700" cy="38.5" r="10.1" fill="#1f6a41"/><circle cx="700" cy="38.5" r="23.2" fill="none" stroke="#1f6a41" stroke-width="9"/><circle cx="812" cy="60" r="80" fill="none" stroke="#1f6a41" stroke-width="18"/><path d="M772 -5 L867 90" stroke="#1f6a41" stroke-width="4"/><path d="M782 -5 L877 90" stroke="#1f6a41" stroke-width="4"/><path d="M792 -5 L887 90" stroke="#1f6a41" stroke-width="4"/><path d="M802 -5 L897 90" stroke="#1f6a41" stroke-width="4"/><path d="M812 -5 L907 90" stroke="#1f6a41" stroke-width="4"/><path d="M918.6 17.7 L959 -22" stroke="#1f6a41" stroke-width="5.5" stroke-linecap="round"/><path d="M918 38 L998 -42" stroke="#1f6a41" stroke-width="5.5" stroke-linecap="round"/><path d="M938 38 L1030 -54" stroke="#1f6a41" stroke-width="5.5" stroke-linecap="round"/><path d="M926.5 69 L1030 -34" stroke="#1f6a41" stroke-width="5.5" stroke-linecap="round"/><path d="M953 65.6 L1030 -11" stroke="#1f6a41" stroke-width="5.5" stroke-linecap="round"/></svg></div>
<svg style="position:absolute;left:1055px;top:16px;" width="12" height="7" viewBox="0 0 12 7"><polygon points="0,0 4,3.5 0,7" fill="#fff"/><polygon points="5,0 9,3.5 5,7" fill="#fff"/></svg>
<div style="position:absolute;left:1105.24px;top:12.80px;font-size:15px;line-height:15px;color:#ffffff;white-space:pre;transform-origin:0 0;transform:scaleX(1.0073);">2019_02_20_example_project_IMPORT_template (1)</div>
<div style="position:absolute;left:1466.26px;top:12.80px;font-size:15px;line-height:15px;color:#ffffff;white-space:pre;transform-origin:0 0;transform:scaleX(0.9193);">.xlsx</div>
<div style="position:absolute;left:1504px;top:20px;width:4px;height:1px;background:#ffffff;"></div>
<div style="position:absolute;left:1514.78px;top:12.80px;font-size:15px;line-height:15px;color:#cfe3d6;white-space:pre;transform-origin:0 0;transform:scaleX(1.0199);opacity:0.4;">Excel (Product Activation Failed)</div>
<div style="position:absolute;left:1785px;top:13px;width:13px;height:1px;background:#ffffff;opacity:0.85"></div>
<svg style="position:absolute;left:1836px;top:8px;" width="14" height="14" viewBox="0 0 14 14"><rect x="0.5" y="0.5" width="12" height="12" fill="none" stroke="#ffffff" opacity="0.85"/></svg>
<svg style="position:absolute;left:1886px;top:8px;" width="14" height="14" viewBox="0 0 14 14"><path d="M0.5 0.5 L13 13 M13 0.5 L0.5 13" stroke="#ffffff" stroke-width="1.1" opacity="0.85"/></svg>
<div style="position:absolute;left:1050.71px;top:55.10px;font-size:15px;line-height:15px;color:#f1f1f1;white-space:pre;transform-origin:0 0;transform:scaleX(1.0774);-webkit-text-stroke:0.25px #f1f1f1;">File</div>
<div style="position:absolute;left:1116.68px;top:55.10px;font-size:15px;line-height:15px;color:#f1f1f1;white-space:pre;transform-origin:0 0;transform:scaleX(1.1024);-webkit-text-stroke:0.25px #f1f1f1;">Home</div>
<div style="position:absolute;left:1185.54px;top:55.10px;font-size:15px;line-height:15px;color:#f1f1f1;white-space:pre;transform-origin:0 0;transform:scaleX(1.0811);-webkit-text-stroke:0.25px #f1f1f1;">Insert</div>
<div style="position:absolute;left:1251.78px;top:55.10px;font-size:15px;line-height:15px;color:#f1f1f1;white-space:pre;transform-origin:0 0;transform:scaleX(1.0127);-webkit-text-stroke:0.25px #f1f1f1;">Page Layout</div>
<div style="position:absolute;left:1362.74px;top:55.10px;font-size:15px;line-height:15px;color:#f1f1f1;white-space:pre;transform-origin:0 0;transform:scaleX(1.0522);-webkit-text-stroke:0.25px #f1f1f1;">Formulas</div>
<div style="position:absolute;left:1454.78px;top:55.10px;font-size:15px;line-height:15px;color:#f1f1f1;white-space:pre;transform-origin:0 0;transform:scaleX(1.0181);-webkit-text-stroke:0.25px #f1f1f1;">Data</div>
<div style="position:absolute;left:1513.45px;top:55.10px;font-size:15px;line-height:15px;color:#f1f1f1;white-space:pre;transform-origin:0 0;transform:scaleX(1.0417);-webkit-text-stroke:0.25px #f1f1f1;">Review</div>
<div style="position:absolute;left:1591.62px;top:55.10px;font-size:15px;line-height:15px;color:#f1f1f1;white-space:pre;transform-origin:0 0;transform:scaleX(1.0350);-webkit-text-stroke:0.25px #f1f1f1;">View</div>
<div style="position:absolute;left:1651.47px;top:55.10px;font-size:15px;line-height:15px;color:#f1f1f1;white-space:pre;transform-origin:0 0;transform:scaleX(1.1094);-webkit-text-stroke:0.25px #f1f1f1;">Help</div>
<svg style="position:absolute;left:1714px;top:54px;" width="16" height="19" viewBox="0 0 16 19"><path d="M5 13.5 C5 10.5 1.5 9.5 1.5 6 A6.5 6 0 0 1 14.5 6 C14.5 9.5 11 10.5 11 13.5 Z" fill="none" stroke="#ffffff" stroke-width="1.2"/><path d="M5.5 15.5 H10.5 M6 17.5 H10" stroke="#ffffff" stroke-width="1.3"/></svg>
<div style="position:absolute;left:1744.68px;top:55.10px;font-size:15px;line-height:15px;color:#f1f1f1;white-space:pre;transform-origin:0 0;transform:scaleX(1.0688);-webkit-text-stroke:0.25px #f1f1f1;">Tell me</div>
<svg style="position:absolute;left:1879px;top:54px;" width="19" height="17" viewBox="0 0 19 17"><path d="M0.6 0.6 H18.4 V11.4 H7 L3.5 15.5 V11.4 H0.6 Z" fill="none" stroke="#ffffff" stroke-width="1.2"/></svg>
<div style="position:absolute;left:1023px;top:83px;width:894px;height:46px;background:#e6e6e6;"></div>
<div style="position:absolute;left:1029px;top:93px;width:102px;height:26px;background:#ffffff;box-sizing:border-box;border:1px solid #c6c6c6"></div>
<div style="position:absolute;left:1035.81px;top:99.70px;font-size:13px;line-height:13px;color:#222;white-space:pre;transform-origin:0 0;transform:scaleX(0.9153);">C3</div>
<svg style="position:absolute;left:1117px;top:102.3px;" width="8" height="5" viewBox="0 0 8 5"><polygon points="0,0 8,0 4,4.5" fill="#666"/></svg>
<div style="position:absolute;left:1146px;top:101px;width:2px;height:2px;background:#9a9a9a;"></div>
<div style="position:absolute;left:1146px;top:105px;width:2px;height:2px;background:#9a9a9a;"></div>
<div style="position:absolute;left:1146px;top:109px;width:2px;height:2px;background:#9a9a9a;"></div>
<div style="position:absolute;left:1161px;top:93px;width:110px;height:26px;background:#ffffff;box-sizing:border-box;border:1px solid #c6c6c6"></div>
<svg style="position:absolute;left:1174px;top:101px;" width="12" height="12" viewBox="0 0 12 12"><path d="M0.5 0.5 L11.5 11.5 M11.5 0.5 L0.5 11.5" stroke="#c4c4c4" stroke-width="1.3"/></svg>
<svg style="position:absolute;left:1209px;top:101px;" width="15" height="12" viewBox="0 0 15 12"><path d="M1 6.5 L5 10.5 L14 1" fill="none" stroke="#c4c4c4" stroke-width="2"/></svg>
<div style="position:absolute;left:1245.76px;top:100.00px;font-size:13px;line-height:13px;color:#555;white-space:pre;transform-origin:0 0;transform:scaleX(1.2226);font-family:'Liberation Serif',serif;font-style:italic;font-weight:bold;">fx</div>
<div style="position:absolute;left:1274px;top:93px;width:640px;height:26px;background:#ffffff;box-sizing:border-box;border:1px solid #c6c6c6"></div>
<div style="position:absolute;left:1285.03px;top:99.70px;font-size:13px;line-height:13px;color:#222;white-space:pre;transform-origin:0 0;transform:scaleX(0.9943);">192.168.1.45</div>
<svg style="position:absolute;left:1900px;top:103px;" width="9" height="6" viewBox="0 0 9 6"><path d="M1 1 L4.5 4.5 L8 1" fill="none" stroke="#555" stroke-width="1.5"/></svg>
<div style="position:absolute;left:1023px;top:129px;width:875px;height:19px;background:#e6e6e6;"></div>
<div style="position:absolute;left:1023px;top:149px;width:26px;height:319px;background:#e6e6e6;"></div>
<div style="position:absolute;left:1050px;top:149px;width:847px;height:319px;background:#ffffff;"></div>
<div style="position:absolute;left:1023px;top:148px;width:875px;height:1px;background:#ababab;"></div>
<div style="position:absolute;left:1049px;top:129px;width:1px;height:339px;background:#ababab;"></div>
<svg style="position:absolute;left:1023px;top:129px" width="26" height="19"><polygon points="23,4 23,16 11,16" fill="#c4c4c4"/></svg>
<div style="position:absolute;left:1191px;top:129px;width:1px;height:19px;background:#c6c6c6;"></div>
<div style="position:absolute;left:1116.18px;top:132.20px;font-size:13px;line-height:13px;color:#444444;white-space:pre;transform-origin:0 0;">A</div>
<div style="position:absolute;left:1496px;top:129px;width:1px;height:19px;background:#c6c6c6;"></div>
<div style="position:absolute;left:1339.48px;top:132.20px;font-size:13px;line-height:13px;color:#444444;white-space:pre;transform-origin:0 0;">B</div>
<div style="position:absolute;left:1497px;top:129px;width:95px;height:19px;background:#d2d2d2;"></div>
<div style="position:absolute;left:1496px;top:147px;width:97px;height:2px;background:#217346;"></div>
<div style="position:absolute;left:1592px;top:129px;width:1px;height:19px;background:#c6c6c6;"></div>
<div style="position:absolute;left:1539.72px;top:132.20px;font-size:13px;line-height:13px;color:#217346;white-space:pre;transform-origin:0 0;">C</div>
<div style="position:absolute;left:1667px;top:129px;width:1px;height:19px;background:#c6c6c6;"></div>
<div style="position:absolute;left:1625.09px;top:132.20px;font-size:13px;line-height:13px;color:#444444;white-space:pre;transform-origin:0 0;">D</div>
<div style="position:absolute;left:1736px;top:129px;width:1px;height:19px;background:#c6c6c6;"></div>
<div style="position:absolute;left:1697.42px;top:132.20px;font-size:13px;line-height:13px;color:#444444;white-space:pre;transform-origin:0 0;">E</div>
<div style="position:absolute;left:1783px;top:129px;width:1px;height:19px;background:#c6c6c6;"></div>
<div style="position:absolute;left:1755.78px;top:132.20px;font-size:13px;line-height:13px;color:#444444;white-space:pre;transform-origin:0 0;">F</div>
<div style="position:absolute;left:1878.09px;top:132.20px;font-size:13px;line-height:13px;color:#444444;white-space:pre;transform-origin:0 0;">G</div>
<div style="position:absolute;left:1023px;top:168px;width:26px;height:1px;background:#c6c6c6;"></div>
<div style="position:absolute;left:1050px;top:168px;width:847px;height:1px;background:#d4d4d4;"></div>
<div style="position:absolute;left:1032.70px;top:152.70px;font-size:13px;line-height:13px;color:#444444;white-space:pre;transform-origin:0 0;">1</div>
<div style="position:absolute;left:1023px;top:188px;width:26px;height:1px;background:#c6c6c6;"></div>
<div style="position:absolute;left:1050px;top:188px;width:847px;height:1px;background:#d4d4d4;"></div>
<div style="position:absolute;left:1032.89px;top:172.70px;font-size:13px;line-height:13px;color:#444444;white-space:pre;transform-origin:0 0;">2</div>
<div style="position:absolute;left:1023px;top:189px;width:26px;height:19px;background:#d2d2d2;"></div>
<div style="position:absolute;left:1023px;top:208px;width:26px;height:1px;background:#c6c6c6;"></div>
<div style="position:absolute;left:1050px;top:208px;width:847px;height:1px;background:#d4d4d4;"></div>
<div style="position:absolute;left:1032.89px;top:192.70px;font-size:13px;line-height:13px;color:#217346;white-space:pre;transform-origin:0 0;">3</div>
<div style="position:absolute;left:1023px;top:209px;width:26px;height:19px;background:#d2d2d2;"></div>
<div style="position:absolute;left:1023px;top:228px;width:26px;height:1px;background:#c6c6c6;"></div>
<div style="position:absolute;left:1050px;top:228px;width:847px;height:1px;background:#d4d4d4;"></div>
<div style="position:absolute;left:1032.96px;top:212.70px;font-size:13px;line-height:13px;color:#217346;white-space:pre;transform-origin:0 0;">4</div>
<div style="position:absolute;left:1023px;top:229px;width:26px;height:19px;background:#d2d2d2;"></div>
<div style="position:absolute;left:1023px;top:248px;width:26px;height:1px;background:#c6c6c6;"></div>
<div style="position:absolute;left:1050px;top:248px;width:847px;height:1px;background:#d4d4d4;"></div>
<div style="position:absolute;left:1032.89px;top:232.70px;font-size:13px;line-height:13px;color:#217346;white-space:pre;transform-origin:0 0;">5</div>
<div style="position:absolute;left:1023px;top:249px;width:26px;height:19px;background:#d2d2d2;"></div>
<div style="position:absolute;left:1023px;top:268px;width:26px;height:1px;background:#c6c6c6;"></div>
<div style="position:absolute;left:1050px;top:268px;width:847px;height:1px;background:#d4d4d4;"></div>
<div style="position:absolute;left:1032.83px;top:252.70px;font-size:13px;line-height:13px;color:#217346;white-space:pre;transform-origin:0 0;">6</div>
<div style="position:absolute;left:1023px;top:269px;width:26px;height:19px;background:#d2d2d2;"></div>
<div style="position:absolute;left:1023px;top:288px;width:26px;height:1px;background:#c6c6c6;"></div>
<div style="position:absolute;left:1050px;top:288px;width:847px;height:1px;background:#d4d4d4;"></div>
<div style="position:absolute;left:1032.89px;top:272.70px;font-size:13px;line-height:13px;color:#217346;white-space:pre;transform-origin:0 0;">7</div>
<div style="position:absolute;left:1023px;top:308px;width:26px;height:1px;background:#c6c6c6;"></div>
<div style="position:absolute;left:1050px;top:308px;width:847px;height:1px;background:#d4d4d4;"></div>
<div style="position:absolute;left:1032.86px;top:292.70px;font-size:13px;line-height:13px;color:#444444;white-space:pre;transform-origin:0 0;">8</div>
<div style="position:absolute;left:1023px;top:328px;width:26px;height:1px;background:#c6c6c6;"></div>
<div style="position:absolute;left:1050px;top:328px;width:847px;height:1px;background:#d4d4d4;"></div>
<div style="position:absolute;left:1032.89px;top:312.70px;font-size:13px;line-height:13px;color:#444444;white-space:pre;transform-origin:0 0;">9</div>
<div style="position:absolute;left:1023px;top:348px;width:26px;height:1px;background:#c6c6c6;"></div>
<div style="position:absolute;left:1050px;top:348px;width:847px;height:1px;background:#d4d4d4;"></div>
<div style="position:absolute;left:1029.03px;top:332.70px;font-size:13px;line-height:13px;color:#444444;white-space:pre;transform-origin:0 0;">10</div>
<div style="position:absolute;left:1023px;top:368px;width:26px;height:1px;background:#c6c6c6;"></div>
<div style="position:absolute;left:1050px;top:368px;width:847px;height:1px;background:#d4d4d4;"></div>
<div style="position:absolute;left:1029.58px;top:352.70px;font-size:13px;line-height:13px;color:#444444;white-space:pre;transform-origin:0 0;">11</div>
<div style="position:absolute;left:1023px;top:388px;width:26px;height:1px;background:#c6c6c6;"></div>
<div style="position:absolute;left:1050px;top:388px;width:847px;height:1px;background:#d4d4d4;"></div>
<div style="position:absolute;left:1029.12px;top:372.70px;font-size:13px;line-height:13px;color:#444444;white-space:pre;transform-origin:0 0;">12</div>
<div style="position:absolute;left:1023px;top:408px;width:26px;height:1px;background:#c6c6c6;"></div>
<div style="position:absolute;left:1050px;top:408px;width:847px;height:1px;background:#d4d4d4;"></div>
<div style="position:absolute;left:1029.06px;top:392.70px;font-size:13px;line-height:13px;color:#444444;white-space:pre;transform-origin:0 0;">13</div>
<div style="position:absolute;left:1023px;top:428px;width:26px;height:1px;background:#c6c6c6;"></div>
<div style="position:absolute;left:1050px;top:428px;width:847px;height:1px;background:#d4d4d4;"></div>
<div style="position:absolute;left:1028.99px;top:412.70px;font-size:13px;line-height:13px;color:#444444;white-space:pre;transform-origin:0 0;">14</div>
<div style="position:absolute;left:1023px;top:448px;width:26px;height:1px;background:#c6c6c6;"></div>
<div style="position:absolute;left:1050px;top:448px;width:847px;height:1px;background:#d4d4d4;"></div>
<div style="position:absolute;left:1029.06px;top:432.70px;font-size:13px;line-height:13px;color:#444444;white-space:pre;transform-origin:0 0;">15</div>
<div style="position:absolute;left:1023px;top:468px;width:26px;height:1px;background:#c6c6c6;"></div>
<div style="position:absolute;left:1050px;top:468px;width:847px;height:1px;background:#d4d4d4;"></div>
<div style="position:absolute;left:1029.06px;top:452.70px;font-size:13px;line-height:13px;color:#444444;white-space:pre;transform-origin:0 0;">16</div>
<div style="position:absolute;left:1048px;top:189px;width:2px;height:100px;background:#217346;"></div>
<div style="position:absolute;left:1191px;top:149px;width:1px;height:319px;background:#d4d4d4;"></div>
<div style="position:absolute;left:1496px;top:149px;width:1px;height:319px;background:#d4d4d4;"></div>
<div style="position:absolute;left:1592px;top:149px;width:1px;height:319px;background:#d4d4d4;"></div>
<div style="position:absolute;left:1667px;top:149px;width:1px;height:319px;background:#d4d4d4;"></div>
<div style="position:absolute;left:1736px;top:149px;width:1px;height:319px;background:#d4d4d4;"></div>
<div style="position:absolute;left:1783px;top:149px;width:1px;height:319px;background:#d4d4d4;"></div>
<div style="position:absolute;left:1050px;top:149px;width:141px;height:20px;overflow:hidden"><div style="position:absolute;left:2.31px;top:3.90px;font-size:13px;line-height:13px;color:#000000;white-space:pre;transform-origin:0 0;transform:scaleX(1.0541);-webkit-text-stroke:0.3px #000000;">Camera name [name]</div></div>
<div style="position:absolute;left:1050px;top:169px;width:141px;height:20px;overflow:hidden"><div style="position:absolute;left:1.89px;top:3.90px;font-size:13px;line-height:13px;color:#000000;white-space:pre;transform-origin:0 0;transform:scaleX(1.0682);-webkit-text-stroke:0.3px #000000;">My camera</div></div>
<div style="position:absolute;left:1192px;top:149px;width:304px;height:20px;overflow:hidden"><div style="position:absolute;left:2.28px;top:3.90px;font-size:13px;line-height:13px;color:#000000;white-space:pre;transform-origin:0 0;transform:scaleX(1.1044);-webkit-text-stroke:0.3px #000000;">Comment [info]</div></div>
<div style="position:absolute;left:1192px;top:169px;width:304px;height:20px;overflow:hidden"><div style="position:absolute;left:2.72px;top:3.90px;font-size:13px;line-height:13px;color:#000000;white-space:pre;transform-origin:0 0;transform:scaleX(1.0613);-webkit-text-stroke:0.3px #000000;">This camera shall be mounted on the 2nd floor.</div></div>
<div style="position:absolute;left:1497px;top:149px;width:95px;height:20px;overflow:hidden"><div style="position:absolute;left:1.77px;top:3.90px;font-size:13px;line-height:13px;color:#000000;white-space:pre;transform-origin:0 0;transform:scaleX(1.0546);-webkit-text-stroke:0.3px #000000;">IP address [ip]</div></div>
<div style="position:absolute;left:1497px;top:169px;width:95px;height:20px;overflow:hidden"><div style="position:absolute;left:2.04px;top:3.90px;font-size:13px;line-height:13px;color:#000000;white-space:pre;transform-origin:0 0;transform:scaleX(0.9896);-webkit-text-stroke:0.3px #000000;">192.168.0.1</div></div>
<div style="position:absolute;left:1593px;top:149px;width:74px;height:20px;overflow:hidden"><div style="position:absolute;left:1.97px;top:3.90px;font-size:13px;line-height:13px;color:#000000;white-space:pre;transform-origin:0 0;transform:scaleX(1.1341);-webkit-text-stroke:0.3px #000000;">[subnet]</div></div>
<div style="position:absolute;left:1593px;top:169px;width:74px;height:20px;overflow:hidden"><div style="position:absolute;left:2.36px;top:3.90px;font-size:13px;line-height:13px;color:#000000;white-space:pre;transform-origin:0 0;transform:scaleX(0.9829);-webkit-text-stroke:0.3px #000000;">255.255.0.0</div></div>
<div style="position:absolute;left:1668px;top:149px;width:68px;height:20px;overflow:hidden"><div style="position:absolute;left:1.99px;top:3.90px;font-size:13px;line-height:13px;color:#000000;white-space:pre;transform-origin:0 0;transform:scaleX(1.1104);-webkit-text-stroke:0.3px #000000;">[gateway]</div></div>
<div style="position:absolute;left:1668px;top:169px;width:68px;height:20px;overflow:hidden"><div style="position:absolute;left:2.48px;top:3.90px;font-size:13px;line-height:13px;color:#000000;white-space:pre;transform-origin:0 0;transform:scaleX(0.9924);-webkit-text-stroke:0.3px #000000;">0.0.0.0</div></div>
<div style="position:absolute;left:1737px;top:149px;width:46px;height:20px;overflow:hidden"><div style="position:absolute;left:1.96px;top:3.90px;font-size:13px;line-height:13px;color:#000000;white-space:pre;transform-origin:0 0;transform:scaleX(1.1439);-webkit-text-stroke:0.3px #000000;">[dhcp]</div></div>
<div style="position:absolute;left:1737px;top:169px;width:46px;height:20px;overflow:hidden"><div style="position:absolute;left:2.80px;top:3.90px;font-size:13px;line-height:13px;color:#000000;white-space:pre;transform-origin:0 0;transform:scaleX(1.0456);-webkit-text-stroke:0.3px #000000;">false</div></div>
<div style="position:absolute;left:1784px;top:149px;width:113px;height:20px;overflow:hidden"><div style="position:absolute;left:2.31px;top:3.90px;font-size:13px;line-height:13px;color:#000000;white-space:pre;transform-origin:0 0;transform:scaleX(1.0600);-webkit-text-stroke:0.3px #000000;">Commercial type name</div></div>
<div style="position:absolute;left:1784px;top:169px;width:113px;height:20px;overflow:hidden"><div style="position:absolute;left:1.99px;top:3.90px;font-size:13px;line-height:13px;color:#000000;white-space:pre;transform-origin:0 0;transform:scaleX(0.9708);-webkit-text-stroke:0.3px #000000;">NDE-8504-R</div></div>
<div style="position:absolute;left:1497px;top:209px;width:95px;height:80px;background:#c6c6c6;"></div>
<div style="position:absolute;left:1497px;top:189px;width:95px;height:20px;overflow:hidden"><div style="position:absolute;left:1.54px;top:3.90px;font-size:13px;line-height:13px;color:#000000;white-space:pre;transform-origin:0 0;transform:scaleX(0.9858);-webkit-text-stroke:0.3px #000000;">192.168.1.45</div></div>
<div style="position:absolute;left:1497px;top:208px;width:95px;height:1px;background:#b4b4b4;"></div>
<div style="position:absolute;left:1497px;top:209px;width:95px;height:20px;overflow:hidden"><div style="position:absolute;left:1.54px;top:3.90px;font-size:13px;line-height:13px;color:#000000;white-space:pre;transform-origin:0 0;transform:scaleX(0.9849);-webkit-text-stroke:0.3px #000000;">192.168.1.30</div></div>
<div style="position:absolute;left:1497px;top:228px;width:95px;height:1px;background:#b4b4b4;"></div>
<div style="position:absolute;left:1497px;top:229px;width:95px;height:20px;overflow:hidden"><div style="position:absolute;left:1.54px;top:3.90px;font-size:13px;line-height:13px;color:#000000;white-space:pre;transform-origin:0 0;transform:scaleX(0.9858);-webkit-text-stroke:0.3px #000000;">192.168.1.36</div></div>
<div style="position:absolute;left:1497px;top:248px;width:95px;height:1px;background:#b4b4b4;"></div>
<div style="position:absolute;left:1497px;top:249px;width:95px;height:20px;overflow:hidden"><div style="position:absolute;left:1.54px;top:3.90px;font-size:13px;line-height:13px;color:#000000;white-space:pre;transform-origin:0 0;transform:scaleX(0.9875);-webkit-text-stroke:0.3px #000000;">192.168.1.47</div></div>
<div style="position:absolute;left:1497px;top:268px;width:95px;height:1px;background:#b4b4b4;"></div>
<div style="position:absolute;left:1497px;top:269px;width:95px;height:20px;overflow:hidden"><div style="position:absolute;left:1.54px;top:3.90px;font-size:13px;line-height:13px;color:#000000;white-space:pre;transform-origin:0 0;transform:scaleX(0.9841);-webkit-text-stroke:0.3px #000000;">192.168.1.44</div></div>
<div style="position:absolute;left:1897px;top:129px;width:20px;height:339px;background:#e6e6e6;"></div>
<div style="position:absolute;left:1897px;top:148px;width:1px;height:320px;background:#bdbdbd;"></div>
<div style="position:absolute;left:1901px;top:131px;width:15px;height:15px;background:#ffffff;box-sizing:border-box;border:1px solid #a0a0a0"></div>
<svg style="position:absolute;left:1904px;top:136px;" width="9" height="5" viewBox="0 0 9 5"><polygon points="0,5 4.5,0 9,5" fill="#777"/></svg>
<div style="position:absolute;left:1901px;top:146px;width:15px;height:322px;background:#ffffff;box-sizing:border-box;border:1px solid #a0a0a0;border-left-width:1.5px;border-right-width:1.5px"></div>
<div style="position:absolute;left:1495px;top:187px;width:99px;height:103px;background:transparent;box-sizing:border-box;border:2px solid #217346"></div>
<div style="position:absolute;left:1590px;top:286px;width:6px;height:6px;background:#217346;box-sizing:border-box;border:1px solid #fff"></div>
<div style="position:absolute;left:1596px;top:292px;width:67px;height:23px;background:#ffffff;box-sizing:border-box;border:1px solid #c6c6c6"></div>
<svg style="position:absolute;left:1599px;top:294px;" width="18" height="18" viewBox="0 0 18 18"><rect x="1" y="3" width="13" height="13" fill="#e8c27c"/><rect x="4" y="1.5" width="8" height="2.5" rx="1" fill="#777"/><path d="M8.5 8.5 H13 L15.5 11 V17.5 H8.5 Z" fill="#fff" stroke="#555"/></svg>
<div style="position:absolute;left:1618.00px;top:298.50px;font-size:15px;line-height:15px;color:#3a3a3a;white-space:pre;transform-origin:0 0;transform:scaleX(1.0032);">(Ctrl)</div>
<svg style="position:absolute;left:1654px;top:302px;" width="6" height="4" viewBox="0 0 6 4"><polygon points="0,0 6,0 3,3.5" fill="#444"/></svg>
<svg style="position:absolute;left:0px;top:0px;" width="200" height="468" viewBox="0 0 200 468"><rect x="19.5" y="289.5" width="63" height="100" fill="none" stroke="#ffffff" stroke-width="2"/><path d="M82.5 289.5 V389.5 H19.5 V289.5" fill="none" stroke="#217346" stroke-width="2" stroke-dasharray="4 3"/></svg>
<div style="position:absolute;left:209.5px;top:6.2px;width:126.10000000000002px;height:28.8px;box-sizing:border-box;border:2.5px solid #ff0000;border-radius:6px;box-shadow:0 0 3px 1px rgba(0,0,0,0.25), inset 0 0 3px 1px rgba(0,0,0,0.18);"></div>
<div style="position:absolute;left:1102.5px;top:7px;width:363.9000000000001px;height:27.5px;box-sizing:border-box;border:2.5px solid #ff0000;border-radius:6px;box-shadow:0 0 3px 1px rgba(0,0,0,0.25), inset 0 0 3px 1px rgba(0,0,0,0.18);"></div>
<div style="position:absolute;left:15.5px;top:289.8px;width:86.5px;height:107.69999999999999px;box-sizing:border-box;border:2.5px solid #ff0000;border-radius:7px;box-shadow:0 0 3px 1px rgba(0,0,0,0.25), inset 0 0 3px 1px rgba(0,0,0,0.18);"></div>
<div style="position:absolute;left:1490.5px;top:183px;width:110.5px;height:115px;box-sizing:border-box;border:2.5px solid #ff0000;border-radius:7px;box-shadow:0 0 3px 1px rgba(0,0,0,0.25), inset 0 0 3px 1px rgba(0,0,0,0.18);"></div>
<svg style="position:absolute;left:0px;top:0px;pointer-events:none" width="1917" height="60" viewBox="0 0 1917 60"><defs><filter id="ts34523" x="-5%" y="-40%" width="110%" height="180%"><feGaussianBlur stdDeviation="1.2"/></filter></defs><text x="345.36" y="25.00" font-family="Liberation Sans" font-size="19.2" textLength="228.96" lengthAdjust="spacingAndGlyphs" fill="rgba(0,0,0,0.6)" stroke="rgba(0,0,0,0.6)" stroke-width="3.2" stroke-linejoin="round" filter="url(#ts34523)">.csv file from Configuration</text><text x="343.86" y="23.20" font-family="Liberation Sans" font-size="19.2" textLength="228.96" lengthAdjust="spacingAndGlyphs" fill="#ff0000" stroke="#ffffff" stroke-width="3.2" stroke-linejoin="round" paint-order="stroke">.csv file from Configuration</text></svg>
<svg style="position:absolute;left:0px;top:0px;pointer-events:none" width="1917" height="60" viewBox="0 0 1917 60"><defs><filter id="ts34543" x="-5%" y="-40%" width="110%" height="180%"><feGaussianBlur stdDeviation="1.2"/></filter></defs><text x="345.55" y="45.60" font-family="Liberation Sans" font-size="19.2" textLength="76.27" lengthAdjust="spacingAndGlyphs" fill="rgba(0,0,0,0.6)" stroke="rgba(0,0,0,0.6)" stroke-width="3.2" stroke-linejoin="round" filter="url(#ts34543)">Manager</text><text x="344.05" y="43.80" font-family="Liberation Sans" font-size="19.2" textLength="76.27" lengthAdjust="spacingAndGlyphs" fill="#ff0000" stroke="#ffffff" stroke-width="3.2" stroke-linejoin="round" paint-order="stroke">Manager</text></svg>
<svg style="position:absolute;left:0px;top:0px;pointer-events:none" width="1917" height="60" viewBox="0 0 1917 60"><defs><filter id="ts150322" x="-5%" y="-40%" width="110%" height="180%"><feGaussianBlur stdDeviation="1.2"/></filter></defs><text x="1504.71" y="24.20" font-family="Liberation Sans" font-size="19.2" textLength="227.53" lengthAdjust="spacingAndGlyphs" fill="rgba(0,0,0,0.6)" stroke="rgba(0,0,0,0.6)" stroke-width="3.2" stroke-linejoin="round" filter="url(#ts150322)">Template to be imported in</text><text x="1503.21" y="22.40" font-family="Liberation Sans" font-size="19.2" textLength="227.53" lengthAdjust="spacingAndGlyphs" fill="#ff0000" stroke="#ffffff" stroke-width="3.2" stroke-linejoin="round" paint-order="stroke">Template to be imported in</text></svg>
<svg style="position:absolute;left:0px;top:0px;pointer-events:none" width="1917" height="60" viewBox="0 0 1917 60"><defs><filter id="ts150343" x="-5%" y="-40%" width="110%" height="180%"><feGaussianBlur stdDeviation="1.2"/></filter></defs><text x="1503.55" y="45.20" font-family="Liberation Sans" font-size="19.2" textLength="182.11" lengthAdjust="spacingAndGlyphs" fill="rgba(0,0,0,0.6)" stroke="rgba(0,0,0,0.6)" stroke-width="3.2" stroke-linejoin="round" filter="url(#ts150343)">Project Assistant App</text><text x="1502.05" y="43.40" font-family="Liberation Sans" font-size="19.2" textLength="182.11" lengthAdjust="spacingAndGlyphs" fill="#ff0000" stroke="#ffffff" stroke-width="3.2" stroke-linejoin="round" paint-order="stroke">Project Assistant App</text></svg>
<svg style="position:absolute;left:0px;top:0px;pointer-events:none" width="1917" height="468" viewBox="0 0 1917 468"><defs><filter id="ash" x="-5%" y="-50%" width="110%" height="200%"><feGaussianBlur stdDeviation="2.2"/></filter></defs><path d="M101.06 396.60 L1464.45 298.78 L1464.80 304.20 L1489.60 290.40 L1463.20 281.20 L1463.55 286.82 L100.94 395.00 Z" fill="rgba(0,0,0,0.32)" transform="translate(2,5)" filter="url(#ash)"/><path d="M101.06 396.60 L1464.45 298.78 L1464.80 304.20 L1489.60 290.40 L1463.20 281.20 L1463.55 286.82 L100.94 395.00 Z" fill="#ff0000"/></svg>
</body></html>
